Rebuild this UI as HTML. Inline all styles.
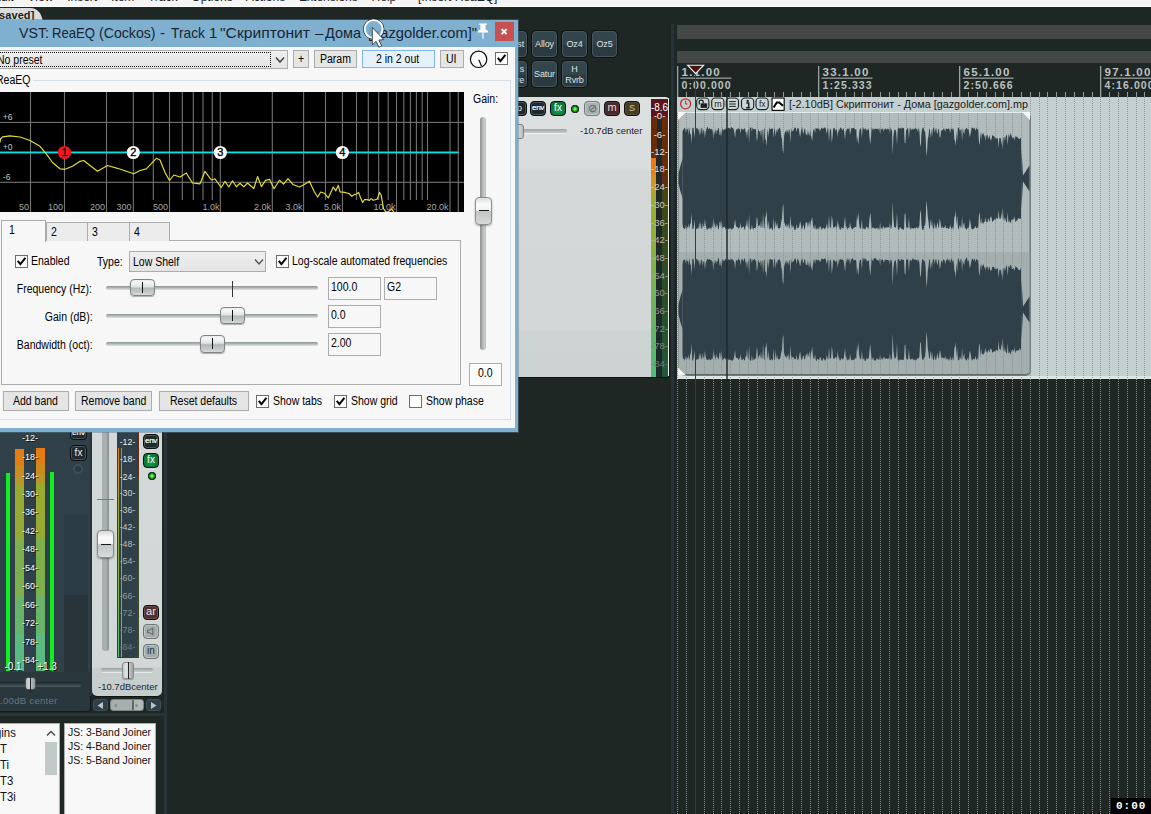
<!DOCTYPE html>
<html lang="ru">
<head>
<meta charset="utf-8">
<title>REAPER - ReaEQ</title>
<style>
*{box-sizing:border-box;margin:0;padding:0}
html,body{width:1151px;height:814px;overflow:hidden;background:#1f2725;font-family:"Liberation Sans",sans-serif;font-size:12px;color:#000}
.a{position:absolute}
.t{position:absolute;white-space:nowrap;transform-origin:0 0;transform:scaleX(.875);line-height:14px;font-size:12px;color:#000}
.btn{position:absolute;border:1px solid #acacac;background:#e5e5e5;height:20px}
.btn .t{top:2px}
.cb{position:absolute;width:13px;height:13px;border:1px solid #6c6c6c;background:#fff}
.cb svg{position:absolute;left:0;top:0}
.inp{position:absolute;border:1px solid #abadb3;background:#f7f7f7;height:23px}
.inp .t{left:2px;top:2px}
.trk{position:absolute;height:4px;border-radius:2px;background:linear-gradient(#8c9292,#b9bdbd 55%,#e2e4e4);}
.th{position:absolute;width:25px;height:17.5px;border-radius:4px;border:1px solid #7f8587;background:linear-gradient(#e9ebeb 0%,#f6f7f7 15%,#e2e5e5 44%,#b4baba 54%,#c2c7c7 80%,#d8dbdb 100%);box-shadow:0 1px 1px rgba(0,0,0,.3)}
.th i{position:absolute;left:10.8px;top:2px;width:1.4px;height:11px;background:#111}
.tb{position:absolute;width:25px;height:26px;border-radius:4px;background:linear-gradient(#34464d 0,#32434a 52%,#2b3a40 56%,#2c3b41 100%);border:1px solid #45555b;box-shadow:0 0 0 1px #0d1213;color:#dde3e3;font-size:9px;line-height:11px;letter-spacing:-.15px;text-align:center}
.sb{position:absolute;width:16px;height:15px;border-radius:4px;background:#20292b;border:1px solid #0c1011;box-shadow:inset 0 0 0 1px #4a5659;color:#e8eeee;font-size:9px;line-height:12px;text-align:center;overflow:hidden}
.ml{position:absolute;font-size:10px;line-height:10px;color:#fff;white-space:nowrap;text-align:center}
.rl{position:absolute;font-size:11.5px;font-weight:bold;line-height:12px;color:#bac2c0;white-space:nowrap;letter-spacing:.3px}
</style>
</head>
<body>
<!-- ============ main window background pieces ============ -->
<div class="a" id="menubar" style="left:0;top:0;width:1151px;height:7px;background:#f5f5f5;border-bottom:1.5px solid #fff;overflow:hidden">
  <div class="t" style="left:-7px;top:-10px;color:#222;transform:none;word-spacing:10.5px">Edit View Insert Item Track Options Actions Extensions Help</div>
  <div class="t" style="left:418px;top:-10px;color:#222;transform:none">[Insert ReaEQ]</div>
</div>
<div class="a" id="tabbar" style="left:0;top:7px;width:1151px;height:14px;background:#1f2725"></div>
<div class="a" id="projtab" style="left:-6px;top:8px;width:48.5px;height:13px;background:#d9dcdc;border-radius:3px 8px 0 0;transform:skewX(18deg);transform-origin:0 100%"></div>
<div class="a" style="left:-1px;top:8px;font-weight:bold;font-size:11px;line-height:14px;color:#1c1c1c;letter-spacing:.1px">saved]</div>
<!-- ============ toolbar buttons ============ -->
<div class="tb" style="left:502px;top:31px;"><span style="position:absolute;right:2px;top:7px">st</span></div>
<div class="tb" style="left:532px;top:31px;"><span style="position:relative;top:7px">Alloy</span></div>
<div class="tb" style="left:562px;top:31px;"><span style="position:relative;top:7px">Oz4</span></div>
<div class="tb" style="left:592px;top:31px;"><span style="position:relative;top:7px">Oz5</span></div>
<div class="tb" style="left:502px;top:61px;"><span style="position:absolute;right:2px;top:2px;text-align:right">s<br>re</span></div>
<div class="tb" style="left:532px;top:61px;"><span style="position:relative;top:7px">Satur</span></div>
<div class="tb" style="left:562px;top:61px;"><span style="position:relative;top:2px">H<br>Rvrb</span></div>
<!-- ============ track control panel ============ -->
<div class="a" id="tcp" style="left:500px;top:97px;width:169px;height:280px;border-radius:0 4px 4px 0;background:linear-gradient(#dce0e0 0,#d9dddd 72px,#d4d8d8 74px,#d3d7d7 232px,#ced3d3 234px,#cdd2d2 100%);box-shadow:1px 1px 0 #0f1413"></div>
<div class="sb" style="left:510.5px;top:101px">io</div>
<div class="sb" style="left:530px;top:101px;font-size:8px;letter-spacing:-.3px;text-shadow:0 0 .6px #fff">env</div>
<div class="sb" style="left:550px;top:101px;background:radial-gradient(ellipse at 50% 65%,#1a9c52,#076129);box-shadow:inset 0 0 0 1px #0e7a3c;color:#fff;font-size:10px">fx</div>
<div class="a" style="left:568.5px;top:102.5px;width:12px;height:12px;border-radius:6px;background:radial-gradient(circle closest-side at 50% 50%,#b4ff9a 0,#30d825 26%,#167018 46%,#26342b 54%,#26342b 68%,rgba(38,52,43,0) 74%)"></div>
<div class="sb" style="left:584px;top:101px;background:#a9b0b0;box-shadow:inset 0 0 0 1px #c4caca;border-color:#70787a;color:#596163;font-size:11px;line-height:13px">&#8856;</div>
<div class="sb" style="left:604px;top:101px;background:#472a2d;box-shadow:inset 0 0 0 1px #57383a;color:#e8dada;font-size:11px;line-height:11px">m</div>
<div class="sb" style="left:624px;top:101px;background:#463e22;box-shadow:inset 0 0 0 1px #585030;color:#d0c8a0;font-size:9px;line-height:13px">S</div>
<div class="a" style="left:515px;top:129px;width:52px;height:4px;border-radius:2px;background:linear-gradient(#9ea5a5,#c4caca);box-shadow:0 1px 0 #eef1f1"></div>
<div class="a" style="left:513px;top:124px;width:11px;height:15px;border-radius:3px;background:linear-gradient(90deg,#f4f4f4,#b8bcbc);border:1px solid #7d8486"></div>
<div class="a" style="left:580px;top:125px;font-size:9.5px;line-height:12px;color:#1c2224;letter-spacing:0;white-space:nowrap">-10.7dB center</div>
<div class="a" id="tcpmeter" style="left:651px;top:99px;width:17px;height:278px;background:#1d2628;overflow:hidden">
 <div class="a" style="left:0;top:0;width:17px;height:18px;background:#5c1519"></div>
 <div class="a" style="left:0;top:18px;width:5.5px;height:41px;background:#6a2c08"></div>
 <div class="a" style="left:0;top:58.5px;width:4.8px;height:220px;background:linear-gradient(#ea7a10 0,#e8800f 16px,#d8901a 17px,#d09820 28px,#bca028 29px,#b4a42a 38px,#9cae30 39px,#94b034 70px,#88b23c 90px,#7cb44c 120px,#6cb45c 150px,#5cb86c 185px,#50be7c 220px)"></div>
 <div class="a" style="left:5.5px;top:18px;width:5px;height:260px;background:#1f282b"></div>
 <div class="a" style="left:10.5px;top:18px;width:6.5px;height:260px;background:linear-gradient(#6a2c08 0,#642e0a 69px,#4c4212 71px,#3e4a18 90px,#344a1e 130px,#2c4e26 170px,#25522e 210px,#1e5a3a 260px)"></div>
 <div class="ml" style="left:-4px;width:25px;top:3.5px;color:rgb(255,255,255);font-size:10px">-8.6</div>
 <div class="ml" style="left:-4px;width:25px;top:12.3px;color:rgb(246,246,246);font-size:9.5px">-0-</div>
 <div class="ml" style="left:-4px;width:25px;top:30.7px;color:rgb(237,237,237);font-size:9.5px">-6-</div>
 <div class="ml" style="left:-4px;width:25px;top:47.5px;color:rgb(228,228,228);font-size:9.5px">-12-</div>
 <div class="ml" style="left:-4px;width:25px;top:65.3px;color:rgb(219,219,219);font-size:9.5px">-18-</div>
 <div class="ml" style="left:-4px;width:25px;top:83.3px;color:rgb(210,210,210);font-size:9.5px">-24-</div>
 <div class="ml" style="left:-4px;width:25px;top:100.9px;color:rgb(201,201,201);font-size:9.5px">-30-</div>
 <div class="ml" style="left:-4px;width:25px;top:118.7px;color:rgb(192,192,192);font-size:9.5px">-36-</div>
 <div class="ml" style="left:-4px;width:25px;top:135.5px;color:rgb(183,183,183);font-size:9.5px">-42-</div>
 <div class="ml" style="left:-4px;width:25px;top:154.4px;color:rgb(174,174,174);font-size:9.5px">-48-</div>
 <div class="ml" style="left:-4px;width:25px;top:172.0px;color:rgb(165,165,165);font-size:9.5px">-54-</div>
 <div class="ml" style="left:-4px;width:25px;top:188.7px;color:rgb(156,156,156);font-size:9.5px">-60-</div>
 <div class="ml" style="left:-4px;width:25px;top:207.0px;color:rgb(147,147,147);font-size:9.5px">-66-</div>
 <div class="ml" style="left:-4px;width:25px;top:224.6px;color:rgb(138,138,138);font-size:9.5px">-72-</div>
 <div class="ml" style="left:-4px;width:25px;top:241.7px;color:rgb(129,129,129);font-size:9.5px">-78-</div>
 <div class="ml" style="left:-4px;width:25px;top:260.3px;color:rgb(120,120,120);font-size:9.5px">-84-</div>
</div>
<div class="a" style="left:668px;top:98px;width:1px;height:278px;background:#eef1f1"></div>
<div class="a" style="left:671px;top:24px;width:3px;height:790px;background:#27333a"></div>
<!-- ============ arrange view ============ -->
<div class="a" style="left:677px;top:25px;width:474px;height:14px;background:#434847"></div>
<div class="a" style="left:677px;top:51px;width:474px;height:12px;background:#434847"></div>
<div class="a" id="lane" style="left:677px;top:97px;width:474px;height:281px;background:#c4cfcf"></div>
<div class="a" id="item" style="left:678px;top:112px;width:352px;height:263px;background:linear-gradient(#b2bbbb 0,#b2bbbb 139px,#a4aeae 139px,#a4aeae 100%);border-radius:5px;border:1px solid #8d9797;border-top-color:#e6eaea;border-bottom-color:#5f6969;box-shadow:1px 1px 0 #6f7878"></div>
<div class="a" style="left:677px;top:376px;width:474px;height:2.5px;background:#dfe5e5"></div>
<svg class="a" style="left:677px;top:97px" width="474" height="281" viewBox="677 97 474 281" shape-rendering="crispEdges">
<line x1="677.5" y1="113" x2="677.5" y2="378" stroke="#7d8f8f" stroke-opacity=".8" stroke-width="1" stroke-dasharray="1 1"/>
<line x1="686.5" y1="113" x2="686.5" y2="378" stroke="#7d8f8f" stroke-opacity=".8" stroke-width="1" stroke-dasharray="1 1"/>
<line x1="695.5" y1="113" x2="695.5" y2="378" stroke="#7d8f8f" stroke-opacity=".8" stroke-width="1" stroke-dasharray="1 1"/>
<line x1="704.5" y1="113" x2="704.5" y2="378" stroke="#7d8f8f" stroke-opacity=".8" stroke-width="1" stroke-dasharray="1 1"/>
<line x1="713.5" y1="113" x2="713.5" y2="378" stroke="#7d8f8f" stroke-opacity=".8" stroke-width="1" stroke-dasharray="1 1"/>
<line x1="721.5" y1="113" x2="721.5" y2="378" stroke="#7d8f8f" stroke-opacity=".8" stroke-width="1" stroke-dasharray="1 1"/>
<line x1="730.5" y1="113" x2="730.5" y2="378" stroke="#7d8f8f" stroke-opacity=".8" stroke-width="1" stroke-dasharray="1 1"/>
<line x1="739.5" y1="113" x2="739.5" y2="378" stroke="#7d8f8f" stroke-opacity=".8" stroke-width="1" stroke-dasharray="1 1"/>
<line x1="748.5" y1="113" x2="748.5" y2="378" stroke="#7d8f8f" stroke-opacity=".8" stroke-width="1" stroke-dasharray="1 1"/>
<line x1="757.5" y1="113" x2="757.5" y2="378" stroke="#7d8f8f" stroke-opacity=".8" stroke-width="1" stroke-dasharray="1 1"/>
<line x1="765.5" y1="113" x2="765.5" y2="378" stroke="#7d8f8f" stroke-opacity=".8" stroke-width="1" stroke-dasharray="1 1"/>
<line x1="774.5" y1="113" x2="774.5" y2="378" stroke="#7d8f8f" stroke-opacity=".8" stroke-width="1" stroke-dasharray="1 1"/>
<line x1="783.5" y1="113" x2="783.5" y2="378" stroke="#7d8f8f" stroke-opacity=".8" stroke-width="1" stroke-dasharray="1 1"/>
<line x1="792.5" y1="113" x2="792.5" y2="378" stroke="#7d8f8f" stroke-opacity=".8" stroke-width="1" stroke-dasharray="1 1"/>
<line x1="801.5" y1="113" x2="801.5" y2="378" stroke="#7d8f8f" stroke-opacity=".8" stroke-width="1" stroke-dasharray="1 1"/>
<line x1="810.5" y1="113" x2="810.5" y2="378" stroke="#7d8f8f" stroke-opacity=".8" stroke-width="1" stroke-dasharray="1 1"/>
<line x1="818.5" y1="113" x2="818.5" y2="378" stroke="#7d8f8f" stroke-opacity=".8" stroke-width="1" stroke-dasharray="1 1"/>
<line x1="827.5" y1="113" x2="827.5" y2="378" stroke="#7d8f8f" stroke-opacity=".8" stroke-width="1" stroke-dasharray="1 1"/>
<line x1="836.5" y1="113" x2="836.5" y2="378" stroke="#7d8f8f" stroke-opacity=".8" stroke-width="1" stroke-dasharray="1 1"/>
<line x1="845.5" y1="113" x2="845.5" y2="378" stroke="#7d8f8f" stroke-opacity=".8" stroke-width="1" stroke-dasharray="1 1"/>
<line x1="854.5" y1="113" x2="854.5" y2="378" stroke="#7d8f8f" stroke-opacity=".8" stroke-width="1" stroke-dasharray="1 1"/>
<line x1="862.5" y1="113" x2="862.5" y2="378" stroke="#7d8f8f" stroke-opacity=".8" stroke-width="1" stroke-dasharray="1 1"/>
<line x1="871.5" y1="113" x2="871.5" y2="378" stroke="#7d8f8f" stroke-opacity=".8" stroke-width="1" stroke-dasharray="1 1"/>
<line x1="880.5" y1="113" x2="880.5" y2="378" stroke="#7d8f8f" stroke-opacity=".8" stroke-width="1" stroke-dasharray="1 1"/>
<line x1="889.5" y1="113" x2="889.5" y2="378" stroke="#7d8f8f" stroke-opacity=".8" stroke-width="1" stroke-dasharray="1 1"/>
<line x1="898.5" y1="113" x2="898.5" y2="378" stroke="#7d8f8f" stroke-opacity=".8" stroke-width="1" stroke-dasharray="1 1"/>
<line x1="906.5" y1="113" x2="906.5" y2="378" stroke="#7d8f8f" stroke-opacity=".8" stroke-width="1" stroke-dasharray="1 1"/>
<line x1="915.5" y1="113" x2="915.5" y2="378" stroke="#7d8f8f" stroke-opacity=".8" stroke-width="1" stroke-dasharray="1 1"/>
<line x1="924.5" y1="113" x2="924.5" y2="378" stroke="#7d8f8f" stroke-opacity=".8" stroke-width="1" stroke-dasharray="1 1"/>
<line x1="933.5" y1="113" x2="933.5" y2="378" stroke="#7d8f8f" stroke-opacity=".8" stroke-width="1" stroke-dasharray="1 1"/>
<line x1="942.5" y1="113" x2="942.5" y2="378" stroke="#7d8f8f" stroke-opacity=".8" stroke-width="1" stroke-dasharray="1 1"/>
<line x1="951.5" y1="113" x2="951.5" y2="378" stroke="#7d8f8f" stroke-opacity=".8" stroke-width="1" stroke-dasharray="1 1"/>
<line x1="959.5" y1="113" x2="959.5" y2="378" stroke="#7d8f8f" stroke-opacity=".8" stroke-width="1" stroke-dasharray="1 1"/>
<line x1="968.5" y1="113" x2="968.5" y2="378" stroke="#7d8f8f" stroke-opacity=".8" stroke-width="1" stroke-dasharray="1 1"/>
<line x1="977.5" y1="113" x2="977.5" y2="378" stroke="#7d8f8f" stroke-opacity=".8" stroke-width="1" stroke-dasharray="1 1"/>
<line x1="986.5" y1="113" x2="986.5" y2="378" stroke="#7d8f8f" stroke-opacity=".8" stroke-width="1" stroke-dasharray="1 1"/>
<line x1="995.5" y1="113" x2="995.5" y2="378" stroke="#7d8f8f" stroke-opacity=".8" stroke-width="1" stroke-dasharray="1 1"/>
<line x1="1003.5" y1="113" x2="1003.5" y2="378" stroke="#7d8f8f" stroke-opacity=".8" stroke-width="1" stroke-dasharray="1 1"/>
<line x1="1012.5" y1="113" x2="1012.5" y2="378" stroke="#7d8f8f" stroke-opacity=".8" stroke-width="1" stroke-dasharray="1 1"/>
<line x1="1021.5" y1="113" x2="1021.5" y2="378" stroke="#7d8f8f" stroke-opacity=".8" stroke-width="1" stroke-dasharray="1 1"/>
<line x1="1030.5" y1="97" x2="1030.5" y2="378" stroke="#7d8f8f" stroke-opacity=".8" stroke-width="1" stroke-dasharray="1 1"/>
<line x1="1039.5" y1="97" x2="1039.5" y2="378" stroke="#7d8f8f" stroke-opacity=".8" stroke-width="1" stroke-dasharray="1 1"/>
<line x1="1047.5" y1="97" x2="1047.5" y2="378" stroke="#7d8f8f" stroke-opacity=".8" stroke-width="1" stroke-dasharray="1 1"/>
<line x1="1056.5" y1="97" x2="1056.5" y2="378" stroke="#7d8f8f" stroke-opacity=".8" stroke-width="1" stroke-dasharray="1 1"/>
<line x1="1065.5" y1="97" x2="1065.5" y2="378" stroke="#7d8f8f" stroke-opacity=".8" stroke-width="1" stroke-dasharray="1 1"/>
<line x1="1074.5" y1="97" x2="1074.5" y2="378" stroke="#7d8f8f" stroke-opacity=".8" stroke-width="1" stroke-dasharray="1 1"/>
<line x1="1083.5" y1="97" x2="1083.5" y2="378" stroke="#7d8f8f" stroke-opacity=".8" stroke-width="1" stroke-dasharray="1 1"/>
<line x1="1092.5" y1="97" x2="1092.5" y2="378" stroke="#7d8f8f" stroke-opacity=".8" stroke-width="1" stroke-dasharray="1 1"/>
<line x1="1100.5" y1="97" x2="1100.5" y2="378" stroke="#7d8f8f" stroke-opacity=".8" stroke-width="1" stroke-dasharray="1 1"/>
<line x1="1109.5" y1="97" x2="1109.5" y2="378" stroke="#7d8f8f" stroke-opacity=".8" stroke-width="1" stroke-dasharray="1 1"/>
<line x1="1118.5" y1="97" x2="1118.5" y2="378" stroke="#7d8f8f" stroke-opacity=".8" stroke-width="1" stroke-dasharray="1 1"/>
<line x1="1127.5" y1="97" x2="1127.5" y2="378" stroke="#7d8f8f" stroke-opacity=".8" stroke-width="1" stroke-dasharray="1 1"/>
<line x1="1136.5" y1="97" x2="1136.5" y2="378" stroke="#7d8f8f" stroke-opacity=".8" stroke-width="1" stroke-dasharray="1 1"/>
<line x1="1144.5" y1="97" x2="1144.5" y2="378" stroke="#7d8f8f" stroke-opacity=".8" stroke-width="1" stroke-dasharray="1 1"/>
</svg>
<svg class="a" style="left:677px;top:97px" width="474" height="281" viewBox="0 0 474 281">
<polygon fill="#2f4048" points="5.5,34.7 6.2,32.8 6.9,32.1 7.6,30.8 8.3,31.8 9.0,36.1 9.7,31.6 10.4,33.0 11.1,30.5 11.8,38.0 12.5,29.8 13.2,37.2 13.9,36.7 14.6,46.8 15.3,31.6 16.0,30.4 16.7,31.5 17.4,41.0 18.1,32.0 18.8,31.4 19.5,31.5 20.2,30.5 20.9,32.8 21.6,32.1 22.3,38.9 23.0,30.1 23.7,38.1 24.4,31.3 25.1,30.7 25.8,38.0 26.5,32.0 27.2,34.5 27.9,41.0 28.6,35.0 29.3,32.6 30.0,30.5 30.7,29.7 31.4,32.8 32.1,31.0 32.8,31.7 33.5,32.2 34.2,31.5 34.9,33.0 35.6,32.8 36.3,42.3 37.0,33.2 37.7,37.8 38.4,31.3 39.1,37.6 39.8,32.7 40.5,34.2 41.2,31.0 41.9,31.5 42.6,37.9 43.3,38.3 44.0,32.2 44.7,40.0 45.4,30.1 46.1,33.4 46.8,32.5 47.5,32.5 48.3,32.6 49.0,30.3 49.7,32.7 50.4,31.2 51.1,31.0 51.8,30.4 52.5,31.5 53.2,31.6 53.9,31.6 54.6,29.5 55.3,30.9 56.0,30.7 56.7,32.2 57.4,35.6 58.1,40.9 58.8,33.5 59.5,31.9 60.2,33.0 60.9,31.1 61.6,31.5 62.3,32.0 63.0,31.8 63.7,36.8 64.4,30.9 65.1,32.4 65.8,31.8 66.5,32.7 67.2,32.0 67.9,30.5 68.6,35.7 69.3,34.5 70.0,41.5 70.7,33.8 71.4,31.8 72.1,46.0 72.8,29.9 73.5,31.0 74.2,29.9 74.9,34.9 75.6,30.3 76.3,32.1 77.0,32.0 77.7,32.4 78.4,31.6 79.1,33.5 79.8,44.1 80.5,41.2 81.2,31.9 81.9,33.6 82.6,35.1 83.3,33.3 84.0,40.0 84.7,33.3 85.4,32.3 86.1,47.5 86.8,32.5 87.5,30.5 88.2,43.1 88.9,42.6 89.6,49.7 90.3,35.6 91.0,31.7 91.7,40.2 92.4,30.0 93.1,31.9 93.8,32.4 94.5,31.4 95.2,31.4 95.9,31.5 96.6,41.2 97.3,30.6 98.0,33.1 98.7,39.7 99.4,32.0 100.1,36.0 100.8,31.2 101.5,32.9 102.2,31.0 102.9,30.5 103.6,33.5 104.3,40.0 105.0,41.5 105.7,53.4 106.4,56.5 107.1,39.5 107.8,35.3 108.5,34.7 109.2,32.7 109.9,36.2 110.6,32.3 111.3,36.7 112.0,32.0 112.7,32.9 113.4,46.0 114.1,30.4 114.8,35.0 115.5,33.8 116.2,34.0 116.9,32.3 117.6,30.2 118.3,30.6 119.0,31.7 119.7,35.0 120.4,30.4 121.1,31.6 121.8,31.2 122.5,36.9 123.2,40.0 123.9,34.5 124.6,32.0 125.3,30.1 126.0,37.0 126.7,35.2 127.4,31.9 128.1,31.2 128.8,37.5 129.5,37.3 130.2,38.7 130.9,32.5 131.6,36.7 132.3,39.4 133.1,32.8 133.8,37.9 134.5,40.6 135.2,43.7 135.9,35.3 136.6,32.3 137.3,31.7 138.0,36.4 138.7,30.8 139.4,31.2 140.1,32.3 140.8,30.9 141.5,31.8 142.2,31.6 142.9,34.4 143.6,32.4 144.3,31.0 145.0,30.4 145.7,32.1 146.4,31.6 147.1,30.6 147.8,30.8 148.5,30.4 149.2,34.1 149.9,36.8 150.6,31.1 151.3,31.8 152.0,44.7 152.7,34.5 153.4,31.3 154.1,32.7 154.8,45.7 155.5,40.0 156.2,30.6 156.9,32.0 157.6,30.8 158.3,33.1 159.0,33.7 159.7,31.5 160.4,40.4 161.1,31.7 161.8,35.8 162.5,32.3 163.2,31.3 163.9,30.0 164.6,31.8 165.3,33.4 166.0,31.9 166.7,31.3 167.4,36.8 168.1,43.1 168.8,34.6 169.5,33.3 170.2,31.4 170.9,31.9 171.6,31.9 172.3,30.1 173.0,38.1 173.7,34.3 174.4,31.1 175.1,31.2 175.8,30.9 176.5,30.9 177.2,31.2 177.9,31.9 178.6,32.8 179.3,31.9 180.0,46.2 180.7,38.8 181.4,48.6 182.1,36.2 182.8,31.7 183.5,31.3 184.2,32.4 184.9,41.2 185.6,30.3 186.3,30.7 187.0,33.0 187.7,31.7 188.4,31.5 189.1,32.0 189.8,33.9 190.5,32.8 191.2,31.2 191.9,33.2 192.6,41.1 193.3,47.5 194.0,39.9 194.7,30.6 195.4,31.8 196.1,33.4 196.8,31.2 197.5,32.2 198.2,31.7 198.9,31.7 199.6,32.1 200.3,32.3 201.0,30.9 201.7,33.3 202.4,30.6 203.1,37.6 203.8,31.0 204.5,32.7 205.2,32.3 205.9,30.9 206.6,34.6 207.3,32.6 208.0,32.1 208.7,31.2 209.4,32.7 210.1,32.6 210.8,31.3 211.5,32.7 212.2,31.3 212.9,37.1 213.6,30.0 214.3,32.6 215.0,33.8 215.7,57.7 216.4,39.2 217.2,33.2 217.9,32.4 218.6,32.9 219.3,35.4 220.0,48.3 220.7,32.5 221.4,30.7 222.1,30.9 222.8,31.8 223.5,31.6 224.2,30.2 224.9,32.2 225.6,30.5 226.3,30.9 227.0,31.1 227.7,46.0 228.4,46.5 229.1,32.7 229.8,33.4 230.5,31.1 231.2,30.9 231.9,41.9 232.6,32.8 233.3,30.0 234.0,33.7 234.7,32.0 235.4,32.5 236.1,30.8 236.8,33.3 237.5,31.8 238.2,31.6 238.9,31.1 239.6,32.2 240.3,32.2 241.0,35.4 241.7,30.1 242.4,34.0 243.1,46.4 243.8,50.0 244.5,35.3 245.2,32.0 245.9,30.5 246.6,30.7 247.3,35.0 248.0,33.2 248.7,41.6 249.4,59.4 250.1,53.7 250.8,41.9 251.5,38.9 252.2,31.8 252.9,32.2 253.6,41.3 254.3,31.4 255.0,40.2 255.7,32.8 256.4,31.0 257.1,30.5 257.8,36.1 258.5,32.3 259.2,30.8 259.9,35.4 260.6,37.0 261.3,32.0 262.0,32.0 262.7,40.9 263.4,39.8 264.1,33.7 264.8,33.2 265.5,33.2 266.2,32.7 266.9,31.1 267.6,32.5 268.3,35.1 269.0,30.9 269.7,32.0 270.4,31.9 271.1,32.3 271.8,31.1 272.5,32.4 273.2,36.0 273.9,31.2 274.6,31.8 275.3,33.0 276.0,30.7 276.7,33.1 277.4,42.4 278.1,44.1 278.8,49.1 279.5,33.7 280.2,44.3 280.9,30.6 281.6,30.4 282.3,31.8 283.0,34.8 283.7,32.2 284.4,32.2 285.1,44.3 285.8,30.3 286.5,35.3 287.2,37.5 287.9,31.9 288.6,32.7 289.3,30.4 290.0,31.6 290.7,32.5 291.4,31.9 292.1,35.4 292.8,40.6 293.5,37.1 294.2,33.2 294.9,30.0 295.6,30.9 296.3,31.3 297.0,32.1 297.7,30.5 298.4,33.7 299.1,32.3 299.8,30.5 300.5,33.0 301.2,31.8 302.0,45.4 302.7,48.0 303.4,34.6 304.1,43.5 304.8,35.5 305.5,38.1 306.2,35.5 306.9,38.3 307.6,38.8 308.3,43.7 309.0,37.8 309.7,39.5 310.4,37.2 311.1,42.3 311.8,40.6 312.5,38.0 313.2,42.1 313.9,43.5 314.6,41.9 315.3,37.8 316.0,38.7 316.7,39.1 317.4,39.5 318.1,42.1 318.8,39.7 319.5,42.0 320.2,41.2 320.9,41.3 321.6,50.7 322.3,41.1 323.0,41.1 323.7,41.0 324.4,48.1 325.1,40.2 325.8,52.7 326.5,40.4 327.2,39.4 327.9,44.1 328.6,40.0 329.3,38.1 330.0,38.6 330.7,48.2 331.4,38.6 332.1,37.3 332.8,41.0 333.5,35.8 334.2,38.1 334.9,40.1 335.6,41.4 336.3,41.2 337.0,39.6 337.7,43.6 338.4,39.4 339.1,39.0 339.8,40.6 340.5,39.7 341.2,41.9 341.9,41.0 342.6,42.4 343.3,41.3 344.0,40.4 344.0,122.2 343.3,121.2 342.6,121.5 341.9,122.1 341.2,120.6 340.5,123.3 339.8,123.3 339.1,124.2 338.4,125.2 337.7,118.5 337.0,123.4 336.3,121.2 335.6,122.8 334.9,122.3 334.2,124.1 333.5,126.8 332.8,123.3 332.1,125.6 331.4,124.8 330.7,115.1 330.0,124.9 329.3,125.3 328.6,122.6 327.9,120.0 327.2,124.2 326.5,121.6 325.8,110.1 325.1,122.7 324.4,115.4 323.7,122.2 323.0,121.3 322.3,121.4 321.6,112.9 320.9,121.6 320.2,122.1 319.5,120.1 318.8,123.6 318.1,121.3 317.4,122.7 316.7,123.2 316.0,124.2 315.3,125.2 314.6,120.8 313.9,119.3 313.2,120.9 312.5,125.0 311.8,123.1 311.1,121.0 310.4,125.5 309.7,124.7 309.0,125.0 308.3,119.9 307.6,125.2 306.9,124.8 306.2,127.6 305.5,125.3 304.8,126.5 304.1,120.7 303.4,128.3 302.7,115.2 302.0,117.8 301.2,132.1 300.5,129.5 299.8,131.3 299.1,131.0 298.4,128.7 297.7,131.1 297.0,131.4 296.3,131.7 295.6,132.3 294.9,132.6 294.2,130.4 293.5,125.8 292.8,121.8 292.1,128.9 291.4,131.3 290.7,130.5 290.0,132.4 289.3,132.5 288.6,130.9 287.9,131.9 287.2,125.6 286.5,126.9 285.8,131.9 285.1,118.9 284.4,130.6 283.7,130.7 283.0,127.4 282.3,129.4 281.6,132.5 280.9,130.8 280.2,118.6 279.5,128.5 278.8,113.8 278.1,119.4 277.4,119.4 276.7,129.5 276.0,133.2 275.3,129.6 274.6,132.3 273.9,131.1 273.2,127.2 272.5,131.1 271.8,132.3 271.1,131.6 270.4,130.7 269.7,131.0 269.0,131.5 268.3,127.7 267.6,130.4 266.9,130.6 266.2,131.2 265.5,129.1 264.8,131.2 264.1,130.1 263.4,124.6 262.7,121.6 262.0,131.6 261.3,130.0 260.6,124.9 259.9,128.2 259.2,132.1 258.5,130.7 257.8,125.5 257.1,131.0 256.4,131.9 255.7,130.1 255.0,122.4 254.3,130.2 253.6,121.6 252.9,131.8 252.2,131.3 251.5,124.5 250.8,119.7 250.1,109.7 249.4,103.3 248.7,121.9 248.0,129.4 247.3,127.8 246.6,132.5 245.9,132.9 245.2,132.6 244.5,127.7 243.8,112.9 243.1,116.1 242.4,128.4 241.7,131.8 241.0,129.3 240.3,132.0 239.6,129.9 238.9,131.2 238.2,131.3 237.5,131.1 236.8,131.6 236.1,131.5 235.4,131.3 234.7,131.8 234.0,130.0 233.3,132.8 232.6,130.4 231.9,120.7 231.2,131.0 230.5,130.9 229.8,130.3 229.1,130.1 228.4,116.8 227.7,116.5 227.0,132.2 226.3,132.9 225.6,131.9 224.9,131.7 224.2,131.8 223.5,130.6 222.8,130.1 222.1,132.9 221.4,133.0 220.7,130.8 220.0,115.5 219.3,128.5 218.6,131.3 217.9,130.0 217.2,130.4 216.4,122.3 215.7,105.2 215.0,127.8 214.3,131.5 213.6,131.7 212.9,125.3 212.2,131.0 211.5,130.1 210.8,130.7 210.1,130.0 209.4,130.6 208.7,130.3 208.0,132.1 207.3,130.4 206.6,128.5 205.9,132.7 205.2,129.8 204.5,131.6 203.8,132.1 203.1,125.0 202.4,133.3 201.7,130.4 201.0,132.9 200.3,130.4 199.6,131.1 198.9,131.8 198.2,131.4 197.5,131.1 196.8,131.8 196.1,130.1 195.4,131.1 194.7,131.9 194.0,123.4 193.3,115.2 192.6,121.2 191.9,129.8 191.2,132.5 190.5,130.4 189.8,129.3 189.1,130.5 188.4,132.3 187.7,132.4 187.0,130.7 186.3,131.7 185.6,132.2 184.9,122.1 184.2,130.3 183.5,131.9 182.8,131.2 182.1,126.8 181.4,115.1 180.7,124.4 180.0,117.2 179.3,130.4 178.6,129.7 177.9,130.3 177.2,130.6 176.5,130.7 175.8,132.3 175.1,132.2 174.4,131.2 173.7,129.6 173.0,124.9 172.3,132.0 171.6,130.5 170.9,130.6 170.2,132.9 169.5,129.7 168.8,129.2 168.1,119.6 167.4,125.3 166.7,131.3 166.0,131.5 165.3,131.3 164.6,129.6 163.9,132.7 163.2,132.5 162.5,131.9 161.8,126.3 161.1,131.2 160.4,122.5 159.7,133.2 159.0,128.1 158.3,130.3 157.6,130.3 156.9,129.8 156.2,132.1 155.5,122.9 154.8,118.3 154.1,129.6 153.4,131.5 152.7,129.2 152.0,118.2 151.3,131.5 150.6,131.2 149.9,125.9 149.2,130.0 148.5,131.3 147.8,131.5 147.1,132.3 146.4,130.7 145.7,130.8 145.0,132.3 144.3,132.6 143.6,130.1 142.9,128.5 142.2,131.8 141.5,131.3 140.8,132.6 140.1,130.3 139.4,132.7 138.7,131.9 138.0,127.0 137.3,132.3 136.6,131.1 135.9,128.1 135.2,119.4 134.5,123.1 133.8,125.1 133.1,130.5 132.3,123.9 131.6,126.4 130.9,131.0 130.2,125.2 129.5,125.8 128.8,125.3 128.1,130.6 127.4,133.0 126.7,129.2 126.0,127.2 125.3,132.1 124.6,132.1 123.9,128.1 123.2,124.3 122.5,127.4 121.8,131.1 121.1,130.7 120.4,131.6 119.7,127.0 119.0,132.3 118.3,132.7 117.6,133.2 116.9,130.7 116.2,128.6 115.5,130.4 114.8,127.0 114.1,132.6 113.4,117.8 112.7,130.1 112.0,132.1 111.3,125.9 110.6,130.8 109.9,126.3 109.2,130.4 108.5,129.1 107.8,126.9 107.1,125.0 106.4,106.5 105.7,109.9 105.0,121.8 104.3,124.2 103.6,129.6 102.9,131.4 102.2,131.5 101.5,131.4 100.8,130.6 100.1,125.6 99.4,130.0 98.7,123.2 98.0,131.0 97.3,132.0 96.6,120.6 95.9,132.7 95.2,133.3 94.5,130.6 93.8,131.6 93.1,131.7 92.4,132.7 91.7,123.4 91.0,132.2 90.3,126.9 89.6,113.2 88.9,119.2 88.2,120.0 87.5,131.7 86.8,130.6 86.1,115.8 85.4,130.8 84.7,130.6 84.0,123.3 83.3,131.1 82.6,127.7 81.9,128.5 81.2,130.0 80.5,122.2 79.8,119.8 79.1,129.2 78.4,131.6 77.7,131.0 77.0,130.7 76.3,132.8 75.6,131.5 74.9,127.8 74.2,131.9 73.5,132.5 72.8,132.2 72.1,117.0 71.4,131.6 70.7,129.0 70.0,122.1 69.3,128.2 68.6,128.9 67.9,133.1 67.2,131.7 66.5,129.0 65.8,130.1 65.1,130.8 64.4,131.6 63.7,125.6 63.0,130.8 62.3,130.1 61.6,132.1 60.9,130.4 60.2,130.2 59.5,130.0 58.8,128.4 58.1,122.1 57.4,127.0 56.7,131.4 56.0,130.7 55.3,132.6 54.6,132.7 53.9,131.1 53.2,132.0 52.5,131.3 51.8,131.8 51.1,132.6 50.4,130.8 49.7,131.3 49.0,132.7 48.3,131.6 47.5,129.3 46.8,130.5 46.1,129.7 45.4,132.0 44.7,122.6 44.0,131.1 43.3,124.6 42.6,125.1 41.9,131.6 41.2,132.8 40.5,127.3 39.8,130.5 39.1,125.9 38.4,132.0 37.7,125.1 37.0,131.7 36.3,120.3 35.6,130.4 34.9,129.1 34.2,132.8 33.5,131.2 32.8,130.3 32.1,132.4 31.4,131.0 30.7,131.9 30.0,133.4 29.3,130.7 28.6,127.4 27.9,121.9 27.2,128.6 26.5,130.2 25.8,125.7 25.1,131.9 24.4,131.5 23.7,125.0 23.0,132.3 22.3,124.4 21.6,132.0 20.9,130.3 20.2,132.1 19.5,131.8 18.8,132.5 18.1,131.6 17.4,122.5 16.7,131.1 16.0,132.6 15.3,131.3 14.6,115.9 13.9,125.9 13.2,126.9 12.5,132.1 11.8,126.5 11.1,131.0 10.4,129.4 9.7,133.0 9.0,127.6 8.3,131.4 7.6,131.9 6.9,131.0 6.2,131.2 5.5,126.9"/>
<polygon fill="#2f4048" points="5.5,167.3 6.2,162.4 6.9,163.8 7.6,161.9 8.3,163.8 9.0,166.7 9.7,161.9 10.4,164.6 11.1,163.0 11.8,168.2 12.5,160.8 13.2,167.3 13.9,168.0 14.6,178.5 15.3,162.1 16.0,161.6 16.7,163.0 17.4,172.6 18.1,163.1 18.8,162.6 19.5,162.0 20.2,161.9 20.9,164.2 21.6,162.7 22.3,169.2 23.0,161.5 23.7,168.4 24.4,162.0 25.1,163.5 25.8,168.6 26.5,164.1 27.2,164.5 27.9,172.5 28.6,166.8 29.3,164.3 30.0,162.5 30.7,161.7 31.4,163.1 32.1,161.8 32.8,162.7 33.5,162.9 34.2,162.5 34.9,164.8 35.6,164.2 36.3,173.9 37.0,162.8 37.7,167.6 38.4,162.3 39.1,167.5 39.8,163.4 40.5,165.1 41.2,161.1 41.9,161.6 42.6,168.3 43.3,168.4 44.0,163.6 44.7,171.3 45.4,161.6 46.1,164.7 46.8,161.9 47.5,164.2 48.3,162.4 49.0,161.3 49.7,163.7 50.4,163.8 51.1,163.0 51.8,162.0 52.5,163.5 53.2,161.3 53.9,163.7 54.6,161.7 55.3,162.1 56.0,163.4 56.7,163.4 57.4,165.5 58.1,172.1 58.8,164.3 59.5,162.7 60.2,163.7 60.9,163.5 61.6,161.3 62.3,163.1 63.0,163.3 63.7,168.5 64.4,162.6 65.1,161.4 65.8,163.0 66.5,164.6 67.2,161.6 67.9,161.4 68.6,166.0 69.3,164.6 70.0,171.9 70.7,165.0 71.4,162.2 72.1,177.3 72.8,161.3 73.5,161.4 74.2,162.4 74.9,166.3 75.6,161.9 76.3,163.2 77.0,162.7 77.7,161.6 78.4,163.7 79.1,163.2 79.8,174.3 80.5,171.0 81.2,162.1 81.9,164.9 82.6,166.1 83.3,162.9 84.0,170.4 84.7,164.2 85.4,162.9 86.1,177.4 86.8,162.9 87.5,162.6 88.2,175.0 88.9,174.6 89.6,180.2 90.3,167.4 91.0,162.1 91.7,171.9 92.4,162.7 93.1,161.7 93.8,162.5 94.5,162.7 95.2,162.6 95.9,162.8 96.6,172.6 97.3,161.8 98.0,162.3 98.7,172.0 99.4,163.8 100.1,167.3 100.8,162.8 101.5,162.9 102.2,161.8 102.9,163.3 103.6,164.6 104.3,170.5 105.0,173.0 105.7,184.9 106.4,187.6 107.1,169.8 107.8,166.7 108.5,165.0 109.2,162.7 109.9,167.6 110.6,164.1 111.3,168.8 112.0,162.9 112.7,164.1 113.4,176.7 114.1,161.2 114.8,166.2 115.5,164.9 116.2,164.4 116.9,163.6 117.6,162.1 118.3,161.2 119.0,163.0 119.7,167.5 120.4,161.0 121.1,163.1 121.8,163.4 122.5,166.8 123.2,169.6 123.9,164.8 124.6,162.4 125.3,161.3 126.0,166.4 126.7,165.5 127.4,162.3 128.1,162.5 128.8,167.6 129.5,167.7 130.2,168.6 130.9,163.0 131.6,167.8 132.3,171.1 133.1,163.6 133.8,168.2 134.5,170.9 135.2,174.1 135.9,167.6 136.6,163.1 137.3,162.5 138.0,167.3 138.7,162.5 139.4,162.3 140.1,164.1 140.8,162.7 141.5,163.0 142.2,163.0 142.9,165.3 143.6,164.0 144.3,162.6 145.0,161.1 145.7,162.2 146.4,162.6 147.1,161.7 147.8,161.5 148.5,161.7 149.2,164.3 149.9,167.4 150.6,163.2 151.3,162.2 152.0,175.8 152.7,163.8 153.4,162.4 154.1,164.0 154.8,176.8 155.5,171.2 156.2,161.7 156.9,163.4 157.6,163.6 158.3,163.9 159.0,165.6 159.7,162.3 160.4,171.4 161.1,162.0 161.8,167.2 162.5,162.2 163.2,162.6 163.9,161.7 164.6,162.9 165.3,162.8 166.0,162.4 166.7,163.9 167.4,168.8 168.1,174.9 168.8,166.3 169.5,163.7 170.2,160.9 170.9,164.2 171.6,162.6 172.3,161.1 173.0,168.1 173.7,163.8 174.4,162.3 175.1,161.4 175.8,161.3 176.5,163.4 177.2,163.5 177.9,162.8 178.6,163.0 179.3,163.8 180.0,177.8 180.7,169.8 181.4,179.3 182.1,167.5 182.8,163.1 183.5,162.8 184.2,163.3 184.9,172.4 185.6,161.5 186.3,160.7 187.0,163.7 187.7,160.8 188.4,162.5 189.1,161.7 189.8,164.7 190.5,163.9 191.2,163.4 191.9,163.5 192.6,171.8 193.3,178.5 194.0,170.2 194.7,160.9 195.4,163.2 196.1,164.5 196.8,161.2 197.5,161.5 198.2,161.2 198.9,161.1 199.6,163.1 200.3,163.6 201.0,162.2 201.7,164.5 202.4,160.9 203.1,168.8 203.8,161.9 204.5,163.3 205.2,163.1 205.9,162.1 206.6,165.2 207.3,164.7 208.0,161.8 208.7,163.5 209.4,162.7 210.1,162.9 210.8,163.1 211.5,163.5 212.2,163.2 212.9,167.8 213.6,162.3 214.3,163.0 215.0,164.7 215.7,188.6 216.4,170.5 217.2,164.9 217.9,163.4 218.6,162.8 219.3,166.5 220.0,179.2 220.7,162.5 221.4,161.9 222.1,162.2 222.8,163.9 223.5,163.7 224.2,161.4 224.9,162.5 225.6,163.2 226.3,162.5 227.0,163.3 227.7,176.8 228.4,177.8 229.1,162.7 229.8,162.8 230.5,162.6 231.2,162.0 231.9,174.1 232.6,164.1 233.3,162.5 234.0,163.7 234.7,163.5 235.4,162.0 236.1,161.0 236.8,163.0 237.5,162.6 238.2,162.8 238.9,162.7 239.6,163.5 240.3,162.0 241.0,165.4 241.7,162.0 242.4,166.1 243.1,178.3 243.8,180.1 244.5,168.0 245.2,161.7 245.9,162.7 246.6,162.9 247.3,165.3 248.0,163.0 248.7,171.7 249.4,190.1 250.1,185.1 250.8,173.6 251.5,169.3 252.2,162.6 252.9,162.3 253.6,172.9 254.3,163.5 255.0,171.4 255.7,163.4 256.4,162.2 257.1,162.4 257.8,167.2 258.5,162.5 259.2,162.0 259.9,165.9 260.6,168.5 261.3,163.1 262.0,162.3 262.7,172.0 263.4,169.8 264.1,164.6 264.8,163.3 265.5,165.9 266.2,162.4 266.9,162.5 267.6,163.2 268.3,167.2 269.0,163.4 269.7,163.0 270.4,161.3 271.1,164.2 271.8,162.6 272.5,162.5 273.2,166.3 273.9,162.7 274.6,161.2 275.3,165.6 276.0,162.0 276.7,165.2 277.4,173.7 278.1,175.5 278.8,180.9 279.5,165.3 280.2,174.9 280.9,161.3 281.6,161.8 282.3,164.0 283.0,165.8 283.7,162.1 284.4,161.8 285.1,174.6 285.8,163.0 286.5,166.2 287.2,167.9 287.9,163.0 288.6,162.2 289.3,160.8 290.0,160.6 290.7,165.1 291.4,162.7 292.1,165.6 292.8,171.7 293.5,168.4 294.2,165.0 294.9,162.1 295.6,161.2 296.3,164.1 297.0,162.5 297.7,161.6 298.4,165.3 299.1,162.5 299.8,162.1 300.5,163.7 301.2,162.6 302.0,176.2 302.7,178.7 303.4,166.0 304.1,173.8 304.8,167.0 305.5,169.5 306.2,166.8 306.9,169.0 307.6,170.2 308.3,173.6 309.0,169.7 309.7,170.1 310.4,169.4 311.1,173.3 311.8,170.7 312.5,169.4 313.2,173.3 313.9,173.8 314.6,173.0 315.3,169.9 316.0,169.9 316.7,169.5 317.4,170.7 318.1,172.4 318.8,171.3 319.5,172.5 320.2,170.8 320.9,172.0 321.6,181.0 322.3,172.8 323.0,172.9 323.7,172.2 324.4,179.3 325.1,171.1 325.8,184.3 326.5,171.7 327.2,170.2 327.9,174.0 328.6,171.8 329.3,168.3 330.0,169.5 330.7,179.0 331.4,169.4 332.1,169.0 332.8,171.0 333.5,167.4 334.2,168.6 334.9,172.0 335.6,172.1 336.3,171.4 337.0,170.9 337.7,174.2 338.4,169.0 339.1,169.7 339.8,170.5 340.5,170.7 341.2,172.9 341.9,172.2 342.6,173.6 343.3,172.4 344.0,171.0 344.0,253.8 343.3,251.7 342.6,251.3 341.9,254.1 341.2,252.7 340.5,253.8 339.8,253.0 339.1,254.5 338.4,256.0 337.7,249.7 337.0,255.3 336.3,253.5 335.6,252.7 334.9,253.1 334.2,255.6 333.5,257.9 332.8,253.9 332.1,256.6 331.4,256.1 330.7,246.5 330.0,256.4 329.3,255.7 328.6,254.5 327.9,250.1 327.2,254.7 326.5,253.6 325.8,240.5 325.1,253.0 324.4,246.3 323.7,253.4 323.0,252.5 322.3,252.1 321.6,243.8 320.9,254.1 320.2,253.4 319.5,252.6 318.8,254.5 318.1,252.9 317.4,254.7 316.7,254.4 316.0,254.9 315.3,256.1 314.6,252.6 313.9,251.7 313.2,251.7 312.5,255.4 311.8,253.9 311.1,252.3 310.4,256.3 309.7,254.0 309.0,255.8 308.3,250.5 307.6,255.6 306.9,256.6 306.2,258.0 305.5,256.5 304.8,257.1 304.1,251.1 303.4,260.6 302.7,246.4 302.0,248.3 301.2,263.1 300.5,260.3 299.8,263.0 299.1,262.1 298.4,258.7 297.7,262.4 297.0,262.3 296.3,261.8 295.6,262.7 294.9,264.1 294.2,260.3 293.5,255.7 292.8,253.6 292.1,259.4 291.4,263.0 290.7,260.6 290.0,263.0 289.3,263.7 288.6,262.0 287.9,262.3 287.2,256.2 286.5,258.9 285.8,262.8 285.1,250.6 284.4,262.6 283.7,261.8 283.0,259.1 282.3,262.2 281.6,263.6 280.9,262.9 280.2,250.2 279.5,260.8 278.8,245.1 278.1,250.2 277.4,250.5 276.7,261.5 276.0,263.8 275.3,259.7 274.6,262.7 273.9,263.6 273.2,258.7 272.5,262.4 271.8,264.1 271.1,261.4 270.4,262.3 269.7,261.0 269.0,263.6 268.3,258.5 267.6,261.5 266.9,261.3 266.2,261.2 265.5,259.7 264.8,261.7 264.1,259.5 263.4,254.5 262.7,253.5 262.0,261.5 261.3,261.0 260.6,256.0 259.9,258.9 259.2,262.7 258.5,263.2 257.8,258.1 257.1,262.5 256.4,263.2 255.7,261.6 255.0,254.3 254.3,262.2 253.6,253.1 252.9,261.0 252.2,261.8 251.5,255.7 250.8,251.6 250.1,240.6 249.4,234.8 248.7,252.5 248.0,260.8 247.3,259.8 246.6,262.5 245.9,262.9 245.2,262.2 244.5,257.1 243.8,244.7 243.1,246.5 242.4,259.2 241.7,262.3 241.0,260.2 240.3,262.1 239.6,262.4 238.9,264.0 238.2,262.2 237.5,263.1 236.8,262.1 236.1,263.8 235.4,261.2 234.7,262.6 234.0,261.5 233.3,262.9 232.6,260.8 231.9,251.9 231.2,262.1 230.5,263.0 229.8,261.6 229.1,261.8 228.4,247.5 227.7,248.3 227.0,262.4 226.3,262.7 225.6,263.3 224.9,262.2 224.2,263.2 223.5,262.7 222.8,262.0 222.1,263.9 221.4,263.6 220.7,262.5 220.0,246.3 219.3,259.3 218.6,261.0 217.9,261.9 217.2,260.3 216.4,253.2 215.7,236.5 215.0,260.5 214.3,263.1 213.6,262.6 212.9,255.9 212.2,262.2 211.5,261.2 210.8,261.7 210.1,262.1 209.4,261.2 208.7,261.6 208.0,262.3 207.3,259.9 206.6,260.1 205.9,263.4 205.2,261.1 204.5,261.7 203.8,263.2 203.1,256.9 202.4,262.7 201.7,262.0 201.0,263.2 200.3,261.3 199.6,261.4 198.9,263.6 198.2,263.6 197.5,263.5 196.8,263.1 196.1,260.1 195.4,262.4 194.7,262.6 194.0,255.6 193.3,247.1 192.6,252.8 191.9,259.8 191.2,262.2 190.5,262.3 189.8,260.4 189.1,262.8 188.4,264.2 187.7,263.7 187.0,260.8 186.3,262.6 185.6,261.7 184.9,253.4 184.2,261.8 183.5,262.5 182.8,261.0 182.1,257.5 181.4,245.0 180.7,255.0 180.0,248.1 179.3,261.6 178.6,261.2 177.9,261.5 177.2,262.8 176.5,262.4 175.8,263.6 175.1,262.8 174.4,263.2 173.7,261.2 173.0,256.8 172.3,263.5 171.6,262.3 170.9,262.5 170.2,263.7 169.5,260.6 168.8,259.5 168.1,250.5 167.4,256.8 166.7,261.1 166.0,262.6 165.3,262.4 164.6,260.5 163.9,262.5 163.2,263.6 162.5,263.3 161.8,258.3 161.1,262.4 160.4,253.3 159.7,262.5 159.0,259.4 158.3,260.6 157.6,262.3 156.9,260.6 156.2,262.5 155.5,254.1 154.8,249.1 154.1,261.0 153.4,261.7 152.7,260.9 152.0,250.1 151.3,262.4 150.6,261.8 149.9,257.9 149.2,261.3 148.5,263.7 147.8,263.5 147.1,261.8 146.4,261.1 145.7,263.3 145.0,264.0 144.3,262.7 143.6,260.4 142.9,260.1 142.2,263.5 141.5,262.5 140.8,262.0 140.1,261.9 139.4,264.4 138.7,262.4 138.0,257.1 137.3,261.7 136.6,262.2 135.9,258.5 135.2,250.1 134.5,254.4 133.8,256.4 133.1,262.9 132.3,253.7 131.6,257.9 130.9,260.8 130.2,255.2 129.5,258.2 128.8,257.5 128.1,262.1 127.4,262.5 126.7,258.9 126.0,258.7 125.3,262.2 124.6,262.8 123.9,260.5 123.2,254.6 122.5,257.1 121.8,261.9 121.1,263.0 120.4,262.5 119.7,257.5 119.0,262.2 118.3,261.9 117.6,262.6 116.9,261.1 116.2,259.7 115.5,260.7 114.8,258.3 114.1,262.9 113.4,248.1 112.7,261.1 112.0,263.4 111.3,256.6 110.6,260.5 109.9,257.6 109.2,261.7 108.5,259.4 107.8,259.0 107.1,256.0 106.4,237.7 105.7,240.5 105.0,252.7 104.3,255.3 103.6,259.6 102.9,262.1 102.2,262.4 101.5,261.9 100.8,262.2 100.1,257.8 99.4,262.2 98.7,252.8 98.0,262.7 97.3,262.7 96.6,251.4 95.9,263.7 95.2,263.1 94.5,261.8 93.8,263.0 93.1,263.4 92.4,262.5 91.7,253.4 91.0,263.0 90.3,258.6 89.6,244.7 88.9,250.8 88.2,249.8 87.5,263.8 86.8,261.5 86.1,246.5 85.4,262.1 84.7,261.6 84.0,254.5 83.3,261.4 82.6,257.6 81.9,259.0 81.2,262.5 80.5,253.3 79.8,250.6 79.1,261.0 78.4,261.7 77.7,263.0 77.0,261.0 76.3,263.0 75.6,263.8 74.9,258.0 74.2,263.5 73.5,263.7 72.8,263.5 72.1,248.4 71.4,262.6 70.7,260.5 70.0,251.9 69.3,259.8 68.6,259.1 67.9,263.6 67.2,263.2 66.5,261.4 65.8,262.6 65.1,263.5 64.4,262.2 63.7,257.3 63.0,261.4 62.3,261.2 61.6,263.3 60.9,261.4 60.2,260.4 59.5,261.2 58.8,260.5 58.1,253.0 57.4,258.5 56.7,262.0 56.0,263.0 55.3,263.7 54.6,263.7 53.9,262.8 53.2,263.0 52.5,262.2 51.8,263.5 51.1,262.3 50.4,261.5 49.7,261.3 49.0,262.8 48.3,262.1 47.5,260.5 46.8,262.4 46.1,262.0 45.4,264.1 44.7,252.9 44.0,262.8 43.3,256.2 42.6,255.5 41.9,261.6 41.2,262.8 40.5,259.2 39.8,261.0 39.1,256.3 38.4,264.0 37.7,256.7 37.0,260.9 36.3,251.7 35.6,262.2 34.9,261.6 34.2,262.7 33.5,263.2 32.8,261.4 32.1,263.4 31.4,262.0 30.7,263.3 30.0,263.0 29.3,261.9 28.6,259.4 27.9,253.4 27.2,260.3 26.5,261.4 25.8,255.8 25.1,262.4 24.4,261.9 23.7,256.0 23.0,262.6 22.3,255.6 21.6,262.4 20.9,262.4 20.2,261.8 19.5,262.9 18.8,262.0 18.1,262.1 17.4,253.2 16.7,261.0 16.0,263.8 15.3,263.3 14.6,246.5 13.9,256.0 13.2,258.0 12.5,264.2 11.8,257.1 11.1,262.8 10.4,259.9 9.7,263.2 9.0,259.1 8.3,261.2 7.6,263.9 6.9,261.4 6.2,262.6 5.5,257.8"/>
<path fill="#2f4048" d="M1.5,76.5 Q3,69.5 5.6,61.5 L5.6,101.5 Q3,93.5 1.5,86.5 Z"/>
<path fill="#2f4048" d="M352.5,68.5 L346,78.5 L344.5,51.5 L344,81.5 L344.5,111.5 L346,84.5 L352.5,94.5 Z"/>
<path fill="#2f4048" d="M1.5,207.5 Q3,200.5 5.6,192.5 L5.6,232.5 Q3,224.5 1.5,217.5 Z"/>
<path fill="#2f4048" d="M352.5,199.5 L346,209.5 L344.5,182.5 L344,212.5 L344.5,242.5 L346,215.5 L352.5,225.5 Z"/>
</svg>
<svg class="a" style="left:678px;top:112px" width="352" height="266" viewBox="0 0 352 266"><path fill="#f4f6f6" d="M0,0 L8,0 L0,8 Z M352,0 L344,0 L352,8 Z M0,263.5 L8,263.5 L0,255.5 Z"/></svg>
<svg class="a" style="left:677px;top:378px" width="474" height="436" viewBox="677 378 474 436" shape-rendering="crispEdges">
<line x1="677.5" y1="379" x2="677.5" y2="814" stroke="#7f9ba3" stroke-opacity=".9" stroke-width="1" stroke-dasharray="1 1"/>
<line x1="686.5" y1="379" x2="686.5" y2="814" stroke="#7f9ba3" stroke-opacity=".9" stroke-width="1" stroke-dasharray="1 1"/>
<line x1="695.5" y1="379" x2="695.5" y2="814" stroke="#7f9ba3" stroke-opacity=".9" stroke-width="1" stroke-dasharray="1 1"/>
<line x1="704.5" y1="379" x2="704.5" y2="814" stroke="#7f9ba3" stroke-opacity=".9" stroke-width="1" stroke-dasharray="1 1"/>
<line x1="713.5" y1="379" x2="713.5" y2="814" stroke="#7f9ba3" stroke-opacity=".9" stroke-width="1" stroke-dasharray="1 1"/>
<line x1="721.5" y1="379" x2="721.5" y2="814" stroke="#7f9ba3" stroke-opacity=".9" stroke-width="1" stroke-dasharray="1 1"/>
<line x1="730.5" y1="379" x2="730.5" y2="814" stroke="#7f9ba3" stroke-opacity=".9" stroke-width="1" stroke-dasharray="1 1"/>
<line x1="739.5" y1="379" x2="739.5" y2="814" stroke="#7f9ba3" stroke-opacity=".9" stroke-width="1" stroke-dasharray="1 1"/>
<line x1="748.5" y1="379" x2="748.5" y2="814" stroke="#7f9ba3" stroke-opacity=".9" stroke-width="1" stroke-dasharray="1 1"/>
<line x1="757.5" y1="379" x2="757.5" y2="814" stroke="#7f9ba3" stroke-opacity=".9" stroke-width="1" stroke-dasharray="1 1"/>
<line x1="765.5" y1="379" x2="765.5" y2="814" stroke="#7f9ba3" stroke-opacity=".9" stroke-width="1" stroke-dasharray="1 1"/>
<line x1="774.5" y1="379" x2="774.5" y2="814" stroke="#7f9ba3" stroke-opacity=".9" stroke-width="1" stroke-dasharray="1 1"/>
<line x1="783.5" y1="379" x2="783.5" y2="814" stroke="#7f9ba3" stroke-opacity=".9" stroke-width="1" stroke-dasharray="1 1"/>
<line x1="792.5" y1="379" x2="792.5" y2="814" stroke="#7f9ba3" stroke-opacity=".9" stroke-width="1" stroke-dasharray="1 1"/>
<line x1="801.5" y1="379" x2="801.5" y2="814" stroke="#7f9ba3" stroke-opacity=".9" stroke-width="1" stroke-dasharray="1 1"/>
<line x1="810.5" y1="379" x2="810.5" y2="814" stroke="#7f9ba3" stroke-opacity=".9" stroke-width="1" stroke-dasharray="1 1"/>
<line x1="818.5" y1="379" x2="818.5" y2="814" stroke="#7f9ba3" stroke-opacity=".9" stroke-width="1" stroke-dasharray="1 1"/>
<line x1="827.5" y1="379" x2="827.5" y2="814" stroke="#7f9ba3" stroke-opacity=".9" stroke-width="1" stroke-dasharray="1 1"/>
<line x1="836.5" y1="379" x2="836.5" y2="814" stroke="#7f9ba3" stroke-opacity=".9" stroke-width="1" stroke-dasharray="1 1"/>
<line x1="845.5" y1="379" x2="845.5" y2="814" stroke="#7f9ba3" stroke-opacity=".9" stroke-width="1" stroke-dasharray="1 1"/>
<line x1="854.5" y1="379" x2="854.5" y2="814" stroke="#7f9ba3" stroke-opacity=".9" stroke-width="1" stroke-dasharray="1 1"/>
<line x1="862.5" y1="379" x2="862.5" y2="814" stroke="#7f9ba3" stroke-opacity=".9" stroke-width="1" stroke-dasharray="1 1"/>
<line x1="871.5" y1="379" x2="871.5" y2="814" stroke="#7f9ba3" stroke-opacity=".9" stroke-width="1" stroke-dasharray="1 1"/>
<line x1="880.5" y1="379" x2="880.5" y2="814" stroke="#7f9ba3" stroke-opacity=".9" stroke-width="1" stroke-dasharray="1 1"/>
<line x1="889.5" y1="379" x2="889.5" y2="814" stroke="#7f9ba3" stroke-opacity=".9" stroke-width="1" stroke-dasharray="1 1"/>
<line x1="898.5" y1="379" x2="898.5" y2="814" stroke="#7f9ba3" stroke-opacity=".9" stroke-width="1" stroke-dasharray="1 1"/>
<line x1="906.5" y1="379" x2="906.5" y2="814" stroke="#7f9ba3" stroke-opacity=".9" stroke-width="1" stroke-dasharray="1 1"/>
<line x1="915.5" y1="379" x2="915.5" y2="814" stroke="#7f9ba3" stroke-opacity=".9" stroke-width="1" stroke-dasharray="1 1"/>
<line x1="924.5" y1="379" x2="924.5" y2="814" stroke="#7f9ba3" stroke-opacity=".9" stroke-width="1" stroke-dasharray="1 1"/>
<line x1="933.5" y1="379" x2="933.5" y2="814" stroke="#7f9ba3" stroke-opacity=".9" stroke-width="1" stroke-dasharray="1 1"/>
<line x1="942.5" y1="379" x2="942.5" y2="814" stroke="#7f9ba3" stroke-opacity=".9" stroke-width="1" stroke-dasharray="1 1"/>
<line x1="951.5" y1="379" x2="951.5" y2="814" stroke="#7f9ba3" stroke-opacity=".9" stroke-width="1" stroke-dasharray="1 1"/>
<line x1="959.5" y1="379" x2="959.5" y2="814" stroke="#7f9ba3" stroke-opacity=".9" stroke-width="1" stroke-dasharray="1 1"/>
<line x1="968.5" y1="379" x2="968.5" y2="814" stroke="#7f9ba3" stroke-opacity=".9" stroke-width="1" stroke-dasharray="1 1"/>
<line x1="977.5" y1="379" x2="977.5" y2="814" stroke="#7f9ba3" stroke-opacity=".9" stroke-width="1" stroke-dasharray="1 1"/>
<line x1="986.5" y1="379" x2="986.5" y2="814" stroke="#7f9ba3" stroke-opacity=".9" stroke-width="1" stroke-dasharray="1 1"/>
<line x1="995.5" y1="379" x2="995.5" y2="814" stroke="#7f9ba3" stroke-opacity=".9" stroke-width="1" stroke-dasharray="1 1"/>
<line x1="1003.5" y1="379" x2="1003.5" y2="814" stroke="#7f9ba3" stroke-opacity=".9" stroke-width="1" stroke-dasharray="1 1"/>
<line x1="1012.5" y1="379" x2="1012.5" y2="814" stroke="#7f9ba3" stroke-opacity=".9" stroke-width="1" stroke-dasharray="1 1"/>
<line x1="1021.5" y1="379" x2="1021.5" y2="814" stroke="#7f9ba3" stroke-opacity=".9" stroke-width="1" stroke-dasharray="1 1"/>
<line x1="1030.5" y1="379" x2="1030.5" y2="814" stroke="#7f9ba3" stroke-opacity=".9" stroke-width="1" stroke-dasharray="1 1"/>
<line x1="1039.5" y1="379" x2="1039.5" y2="814" stroke="#7f9ba3" stroke-opacity=".9" stroke-width="1" stroke-dasharray="1 1"/>
<line x1="1047.5" y1="379" x2="1047.5" y2="814" stroke="#7f9ba3" stroke-opacity=".9" stroke-width="1" stroke-dasharray="1 1"/>
<line x1="1056.5" y1="379" x2="1056.5" y2="814" stroke="#7f9ba3" stroke-opacity=".9" stroke-width="1" stroke-dasharray="1 1"/>
<line x1="1065.5" y1="379" x2="1065.5" y2="814" stroke="#7f9ba3" stroke-opacity=".9" stroke-width="1" stroke-dasharray="1 1"/>
<line x1="1074.5" y1="379" x2="1074.5" y2="814" stroke="#7f9ba3" stroke-opacity=".9" stroke-width="1" stroke-dasharray="1 1"/>
<line x1="1083.5" y1="379" x2="1083.5" y2="814" stroke="#7f9ba3" stroke-opacity=".9" stroke-width="1" stroke-dasharray="1 1"/>
<line x1="1092.5" y1="379" x2="1092.5" y2="814" stroke="#7f9ba3" stroke-opacity=".9" stroke-width="1" stroke-dasharray="1 1"/>
<line x1="1100.5" y1="379" x2="1100.5" y2="814" stroke="#7f9ba3" stroke-opacity=".9" stroke-width="1" stroke-dasharray="1 1"/>
<line x1="1109.5" y1="379" x2="1109.5" y2="814" stroke="#7f9ba3" stroke-opacity=".9" stroke-width="1" stroke-dasharray="1 1"/>
<line x1="1118.5" y1="379" x2="1118.5" y2="814" stroke="#7f9ba3" stroke-opacity=".9" stroke-width="1" stroke-dasharray="1 1"/>
<line x1="1127.5" y1="379" x2="1127.5" y2="814" stroke="#7f9ba3" stroke-opacity=".9" stroke-width="1" stroke-dasharray="1 1"/>
<line x1="1136.5" y1="379" x2="1136.5" y2="814" stroke="#7f9ba3" stroke-opacity=".9" stroke-width="1" stroke-dasharray="1 1"/>
<line x1="1144.5" y1="379" x2="1144.5" y2="814" stroke="#7f9ba3" stroke-opacity=".9" stroke-width="1" stroke-dasharray="1 1"/>
</svg>
<svg class="a" style="left:677px;top:63px" width="474" height="34" viewBox="0 0 474 34">
<rect x="0" y="29" width="1" height="5" fill="#8f9999"/>
<rect x="9" y="29" width="1" height="5" fill="#8f9999"/>
<rect x="18" y="29" width="1" height="5" fill="#8f9999"/>
<rect x="27" y="29" width="1" height="5" fill="#8f9999"/>
<rect x="36" y="29" width="1" height="5" fill="#8f9999"/>
<rect x="44" y="29" width="1" height="5" fill="#8f9999"/>
<rect x="53" y="29" width="1" height="5" fill="#8f9999"/>
<rect x="62" y="29" width="1" height="5" fill="#8f9999"/>
<rect x="71" y="29" width="1" height="5" fill="#8f9999"/>
<rect x="80" y="29" width="1" height="5" fill="#8f9999"/>
<rect x="88" y="29" width="1" height="5" fill="#8f9999"/>
<rect x="97" y="29" width="1" height="5" fill="#8f9999"/>
<rect x="106" y="29" width="1" height="5" fill="#8f9999"/>
<rect x="115" y="29" width="1" height="5" fill="#8f9999"/>
<rect x="124" y="29" width="1" height="5" fill="#8f9999"/>
<rect x="133" y="29" width="1" height="5" fill="#8f9999"/>
<rect x="141" y="29" width="1" height="5" fill="#8f9999"/>
<rect x="150" y="29" width="1" height="5" fill="#8f9999"/>
<rect x="159" y="29" width="1" height="5" fill="#8f9999"/>
<rect x="168" y="29" width="1" height="5" fill="#8f9999"/>
<rect x="177" y="29" width="1" height="5" fill="#8f9999"/>
<rect x="185" y="29" width="1" height="5" fill="#8f9999"/>
<rect x="194" y="29" width="1" height="5" fill="#8f9999"/>
<rect x="203" y="29" width="1" height="5" fill="#8f9999"/>
<rect x="212" y="29" width="1" height="5" fill="#8f9999"/>
<rect x="221" y="29" width="1" height="5" fill="#8f9999"/>
<rect x="229" y="29" width="1" height="5" fill="#8f9999"/>
<rect x="238" y="29" width="1" height="5" fill="#8f9999"/>
<rect x="247" y="29" width="1" height="5" fill="#8f9999"/>
<rect x="256" y="29" width="1" height="5" fill="#8f9999"/>
<rect x="265" y="29" width="1" height="5" fill="#8f9999"/>
<rect x="274" y="29" width="1" height="5" fill="#8f9999"/>
<rect x="282" y="29" width="1" height="5" fill="#8f9999"/>
<rect x="291" y="29" width="1" height="5" fill="#8f9999"/>
<rect x="300" y="29" width="1" height="5" fill="#8f9999"/>
<rect x="309" y="29" width="1" height="5" fill="#8f9999"/>
<rect x="318" y="29" width="1" height="5" fill="#8f9999"/>
<rect x="326" y="29" width="1" height="5" fill="#8f9999"/>
<rect x="335" y="29" width="1" height="5" fill="#8f9999"/>
<rect x="344" y="29" width="1" height="5" fill="#8f9999"/>
<rect x="353" y="29" width="1" height="5" fill="#8f9999"/>
<rect x="362" y="29" width="1" height="5" fill="#8f9999"/>
<rect x="370" y="29" width="1" height="5" fill="#8f9999"/>
<rect x="379" y="29" width="1" height="5" fill="#8f9999"/>
<rect x="388" y="29" width="1" height="5" fill="#8f9999"/>
<rect x="397" y="29" width="1" height="5" fill="#8f9999"/>
<rect x="406" y="29" width="1" height="5" fill="#8f9999"/>
<rect x="415" y="29" width="1" height="5" fill="#8f9999"/>
<rect x="423" y="29" width="1" height="5" fill="#8f9999"/>
<rect x="432" y="29" width="1" height="5" fill="#8f9999"/>
<rect x="441" y="29" width="1" height="5" fill="#8f9999"/>
<rect x="450" y="29" width="1" height="5" fill="#8f9999"/>
<rect x="459" y="29" width="1" height="5" fill="#8f9999"/>
<rect x="467" y="29" width="1" height="5" fill="#8f9999"/>
<rect x="0" y="3" width="1.3" height="31" fill="#9aa4a4"/>
<rect x="3.5" y="14.6" width="51" height="1.1" fill="#aab2b2"/>
<rect x="141" y="3" width="1.3" height="31" fill="#9aa4a4"/>
<rect x="144.5" y="14.6" width="51" height="1.1" fill="#aab2b2"/>
<rect x="282" y="3" width="1.3" height="31" fill="#9aa4a4"/>
<rect x="285.5" y="14.6" width="51" height="1.1" fill="#aab2b2"/>
<rect x="423" y="3" width="1.3" height="31" fill="#9aa4a4"/>
<rect x="426.5" y="14.6" width="51" height="1.1" fill="#aab2b2"/>
</svg>
<div class="rl" style="left:681.5px;top:65.8px;letter-spacing:1.25px">1.1.00</div>
<div class="rl" style="left:681.5px;top:79.1px;font-size:10.5px;letter-spacing:1.1px">0:00.000</div>
<div class="rl" style="left:822.5px;top:65.8px;letter-spacing:1.25px">33.1.00</div>
<div class="rl" style="left:822.5px;top:79.1px;font-size:10.5px;letter-spacing:1.1px">1:25.333</div>
<div class="rl" style="left:963.5px;top:65.8px;letter-spacing:1.25px">65.1.00</div>
<div class="rl" style="left:963.5px;top:79.1px;font-size:10.5px;letter-spacing:1.1px">2:50.666</div>
<div class="rl" style="left:1104.5px;top:65.8px;letter-spacing:1.25px">97.1.00</div>
<div class="rl" style="left:1104.5px;top:79.1px;font-size:10.5px;letter-spacing:1.1px">4:16.000</div>
<svg class="a" style="left:677px;top:97px" width="120" height="15" viewBox="0 0 120 15">
<circle cx="8.6" cy="6.8" r="5" fill="none" stroke="#c23030" stroke-width="1.3"/><path d="M8.6,3.5 V7 H10.6" stroke="#c23030" stroke-width="1" fill="none"/>
<rect x="19.7" y="1" width="12.2" height="11.6" rx="3.6" fill="#ccd6d6" stroke="#1c2424" stroke-width="1.1"/>
<rect x="34.7" y="1" width="12.2" height="11.6" rx="3.6" fill="#ccd6d6" stroke="#1c2424" stroke-width="1.1"/>
<rect x="49.3" y="1" width="12.2" height="11.6" rx="3.6" fill="#ccd6d6" stroke="#1c2424" stroke-width="1.1"/>
<rect x="64.5" y="1" width="12.2" height="11.6" rx="3.6" fill="#ccd6d6" stroke="#1c2424" stroke-width="1.1"/>
<rect x="79" y="1" width="12.2" height="11.6" rx="3.6" fill="#ccd6d6" stroke="#1c2424" stroke-width="1.1"/>
<rect x="23.6" y="6.3" width="6.6" height="4.6" fill="#1c2424"/><path d="M22.2,7.4 V5 Q22.2,3.2 24.2,3.2 Q26.2,3.2 26.2,5 V6.3" stroke="#1c2424" stroke-width="1.2" fill="none"/>
<text x="40.9" y="9.5" font-size="9" font-family="Liberation Sans, sans-serif" text-anchor="middle" fill="#1c2424">m</text>
<path d="M52.2,4.6 H58.8 M52.2,7 H58.8 M52.2,9.4 H58.8" stroke="#1c2424" stroke-width="1"/>
<circle cx="70.7" cy="3.9" r="1.2" fill="#1c2424"/><path d="M69.3,6 H71.7 V10.6 M69,10.8 H73" stroke="#1c2424" stroke-width="1.5" fill="none"/>
<text x="85.2" y="10" font-size="8.5" font-family="Liberation Sans, sans-serif" text-anchor="middle" fill="#1c2424">fx</text>
<rect x="94.5" y="0.5" width="13.2" height="13.4" fill="#000"/><rect x="95.6" y="1.6" width="11" height="11.2" fill="#fff"/><path d="M96.6,10.6 L99.8,5.4 H102.2 L106,8.8" stroke="#000" stroke-width="2" fill="none" stroke-linejoin="miter"/>
</svg>
<div class="t" style="left:789.3px;top:97.5px;font-size:11px;line-height:13px;transform:scaleX(.983);color:#1a2020">[-2.10dB] Скриптонит - Дома [gazgolder.com].mp</div>
<div class="a" style="left:726.2px;top:97px;width:1.6px;height:717px;background:rgba(30,38,38,.72)"></div>
<div class="a" style="left:695px;top:70px;width:1px;height:744px;background:#7c1f22"></div>
<svg class="a" style="left:685px;top:63px" width="22" height="12" viewBox="0 0 22 12"><path d="M2.6,2.2 H18.6 L10.6,10.6 Z" fill="#4a1416" stroke="#f2f2f2" stroke-width="1.1" stroke-linejoin="miter"/></svg>
<div class="a" style="left:1111px;top:798px;width:40px;height:16px;background:#000;color:#fff;font-family:'Liberation Mono',monospace;font-weight:bold;font-size:11px;line-height:16px;letter-spacing:1px;padding-left:5px">0:00</div>
<!-- ============ mixer ============ -->
<div class="a" id="master" style="left:-4px;top:428px;width:94px;height:282.5px;background:#2f4048;border-radius:0 0 4px 0;box-shadow:1px 1px 0 #141a19"></div>
<div class="a" style="left:64px;top:515px;width:24px;height:157px;background:linear-gradient(#2c3c44 0,#2c3c44 80px,#283439 80px,#283439 100%)"></div>
<div class="a" style="left:-4px;top:672px;width:94px;height:38.5px;background:#2a373c;border-radius:0 0 4px 0"></div>
<div class="a" style="left:15px;top:449px;width:9px;height:222px;background:linear-gradient(#e87a12 0,#e07e14 15.6px,#cf8a1c 15.6px,#cf8a1c 25.9px,#b89828 25.9px,#b89828 36.2px,#98aa30 36.2px,#96aa32 90.4px,#7eb04c 90.4px,#7cb04e 147.9px,#6ab468 147.9px,#68b46a 184.7px,#5cba80 184.7px,#5cba80 223px)"></div>
<div class="a" style="left:36px;top:448px;width:9px;height:223px;background:linear-gradient(#e87a12 0,#e07e14 15.6px,#cf8a1c 15.6px,#cf8a1c 25.9px,#b89828 25.9px,#b89828 36.2px,#98aa30 36.2px,#96aa32 90.4px,#7eb04c 90.4px,#7cb04e 147.9px,#6ab468 147.9px,#68b46a 184.7px,#5cba80 184.7px,#5cba80 223px)"></div>
<div class="a" style="left:6px;top:473px;width:4px;height:198px;background:#10f020"></div>
<div class="a" style="left:50px;top:472px;width:4px;height:199px;background:#10f020"></div>
<div class="ml" style="left:15px;width:30px;top:432.9px;font-size:9px;text-shadow:1px 1px 0 #10181a">-12-</div>
<div class="ml" style="left:15px;width:30px;top:452.2px;font-size:9px;text-shadow:1px 1px 0 #10181a">-18-</div>
<div class="ml" style="left:15px;width:30px;top:470.6px;font-size:9px;text-shadow:1px 1px 0 #10181a">-24-</div>
<div class="ml" style="left:15px;width:30px;top:489.0px;font-size:9px;text-shadow:1px 1px 0 #10181a">-30-</div>
<div class="ml" style="left:15px;width:30px;top:507.0px;font-size:9px;text-shadow:1px 1px 0 #10181a">-36-</div>
<div class="ml" style="left:15px;width:30px;top:525.6px;font-size:9px;text-shadow:1px 1px 0 #10181a">-42-</div>
<div class="ml" style="left:15px;width:30px;top:544.0px;font-size:9px;text-shadow:1px 1px 0 #10181a">-48-</div>
<div class="ml" style="left:15px;width:30px;top:562.5px;font-size:9px;text-shadow:1px 1px 0 #10181a">-54-</div>
<div class="ml" style="left:15px;width:30px;top:581.0px;font-size:9px;text-shadow:1px 1px 0 #10181a">-60-</div>
<div class="ml" style="left:15px;width:30px;top:599.5px;font-size:9px;text-shadow:1px 1px 0 #10181a">-66-</div>
<div class="ml" style="left:15px;width:30px;top:618.0px;font-size:9px;text-shadow:1px 1px 0 #10181a">-72-</div>
<div class="ml" style="left:15px;width:30px;top:636.5px;font-size:9px;text-shadow:1px 1px 0 #10181a">-78-</div>
<div class="ml" style="left:15px;width:30px;top:655.0px;font-size:9px;text-shadow:1px 1px 0 #10181a">-84-</div>
<div class="ml" style="left:2px;width:22px;top:662px;font-size:10px;text-shadow:1px 1px 0 #10181a">-0.1</div>
<div class="ml" style="left:36px;width:22px;top:662px;font-size:10px;text-shadow:1px 1px 0 #10181a">+1.3</div>
<div class="sb" style="left:70px;top:424px;width:17px;height:16px;line-height:16px;font-size:8px;text-shadow:0 0 .6px #fff">env</div>
<div class="sb" style="left:70px;top:445px;width:17px;height:16px;font-size:10px;line-height:13px">fx</div>
<div class="a" style="left:73px;top:464px;width:10px;height:10px;border-radius:5px;border:2px solid #3e4e56;background:#2a383f"></div>
<div class="a" style="left:-2px;top:682px;width:83px;height:4.5px;border-radius:2px;background:linear-gradient(#1c2529,#4c5c63)"></div>
<div class="a" style="left:25px;top:677px;width:11px;height:13px;border-radius:3px;background:linear-gradient(90deg,#b4baba,#d4d8d8 35%,#8c9292);border:1px solid #4c5458"></div><div class="a" style="left:30px;top:677px;width:1.3px;height:15px;background:#1a1e1e"></div>
<div class="a" style="left:-5.5px;top:695px;font-size:9.5px;line-height:12px;color:#66787f;letter-spacing:.3px;white-space:nowrap">0.00dB center</div>
<div class="a" id="strip" style="left:92px;top:428px;width:70px;height:268px;background:linear-gradient(#d3d8d8 0,#d2d7d7 239px,#c8cfcf 240px,#c6cdcd 100%);border-radius:0 0 5px 5px;box-shadow:0 1px 0 #101514"></div>
<div class="a" style="left:90px;top:428px;width:2px;height:268px;background:#2a3434"></div>
<div class="a" style="left:102px;top:428px;width:6.5px;height:223px;border-radius:0 0 3px 3px;background:linear-gradient(90deg,#a9b0b0 0,#a9b0b0 72%,#8d9595 80%,#8d9595 100%)"></div>
<div class="a" style="left:97px;top:499px;width:17px;height:1px;background:#6f7777"></div>
<div class="a" style="left:97px;top:530px;width:17px;height:28px;border-radius:4px;border:1px solid #858c8c;background:linear-gradient(#d8dada 0,#fafafa 25%,#f2f2f2 48%,#c2c6c6 52%,#dadcdc 100%);box-shadow:0 1px 2px rgba(0,0,0,.35)"></div><div class="a" style="left:100.5px;top:543.8px;width:10.5px;height:1.2px;background:#1a1a1a"></div>
<div class="a" style="left:117px;top:428px;width:22px;height:229.5px;background:#2f4048"></div>
<div class="a" style="left:137px;top:428px;width:2px;height:49px;background:#6a2a10"></div><div class="a" style="left:137px;top:477px;width:2px;height:180px;background:#3a4a24"></div>
<div class="a" style="left:117.8px;top:448px;width:1.3px;height:209px;background:linear-gradient(#e07a18 0,#d89020 25px,#a8a42c 45px,#88ae3c 110px,#6cb45c 175px,#5cba6c 210px)"></div>
<div class="a" style="left:120.6px;top:448px;width:1.3px;height:209px;background:linear-gradient(#e07a18 0,#d89020 25px,#a8a42c 45px,#88ae3c 110px,#6cb45c 175px,#5cba6c 210px)"></div>
<div class="ml" style="left:117.5px;width:20px;top:436.9px;color:#eef0f0;font-size:8.8px">-12-</div>
<div class="ml" style="left:117.5px;width:20px;top:454.1px;color:#e8ecec;font-size:8.8px">-18-</div>
<div class="ml" style="left:117.5px;width:20px;top:471.6px;color:#e0e4e4;font-size:8.8px">-24-</div>
<div class="ml" style="left:117.5px;width:20px;top:488.0px;color:#d6dada;font-size:8.8px">-30-</div>
<div class="ml" style="left:117.5px;width:20px;top:505.0px;color:#ccd2d2;font-size:8.8px">-36-</div>
<div class="ml" style="left:117.5px;width:20px;top:522.0px;color:#c2c8c8;font-size:8.8px">-42-</div>
<div class="ml" style="left:117.5px;width:20px;top:539.0px;color:#b6bebe;font-size:8.8px">-48-</div>
<div class="ml" style="left:117.5px;width:20px;top:556.0px;color:#aab2b2;font-size:8.8px">-54-</div>
<div class="ml" style="left:117.5px;width:20px;top:573.0px;color:#9ea8a8;font-size:8.8px">-60-</div>
<div class="ml" style="left:117.5px;width:20px;top:590.5px;color:#929c9c;font-size:8.8px">-66-</div>
<div class="ml" style="left:117.5px;width:20px;top:607.5px;color:#869292;font-size:8.8px">-72-</div>
<div class="ml" style="left:117.5px;width:20px;top:624.5px;color:#7a8888;font-size:8.8px">-78-</div>
<div class="ml" style="left:117.5px;width:20px;top:641.5px;color:#6e7c7c;font-size:8.8px">-84-</div>
<div class="sb" style="left:143px;top:433.5px;font-size:8px;letter-spacing:-.3px;text-shadow:0 0 .6px #fff">env</div>
<div class="sb" style="left:143px;top:453px;background:radial-gradient(ellipse at 50% 65%,#1a9c52,#076129);box-shadow:inset 0 0 0 1px #0e7a3c;color:#fff;font-size:10px">fx</div>
<div class="a" style="left:145.5px;top:470px;width:12px;height:12px;border-radius:6px;background:radial-gradient(circle closest-side at 50% 50%,#b4ff9a 0,#30d825 26%,#167018 46%,#26342b 54%,#26342b 68%,rgba(38,52,43,0) 74%)"></div>
<div class="sb" style="left:143px;top:604.5px;background:#4f3133;box-shadow:inset 0 0 0 1px #6c4c4e;color:#f0e6e6;font-size:11px;line-height:10px">ar</div>
<div class="sb" style="left:143px;top:624px;background:#a4acac;box-shadow:inset 0 0 0 1px #c0c6c6;border-color:#6c7476"><svg width="14" height="13" viewBox="0 0 14 13" style="position:absolute;left:0;top:0"><path d="M3.5,5.2 H5.5 L8.8,2.8 V10 L5.5,7.6 H3.5 Z" fill="none" stroke="#5a6264" stroke-width="1"/></svg></div>
<div class="sb" style="left:143px;top:643.5px;background:#a4acac;box-shadow:inset 0 0 0 1px #c0c6c6;border-color:#6c7476;color:#2c3436;font-size:10px;line-height:12px">in</div>
<div class="a" style="left:101px;top:668px;width:52px;height:3.5px;border-radius:2px;background:linear-gradient(#9aa2a2,#c6cccc);box-shadow:0 1px 0 #e8ecec"></div>
<div class="a" style="left:122px;top:662px;width:11.5px;height:17px;border-radius:3px;background:linear-gradient(90deg,#c4caca,#e0e3e3 35%,#9aa1a1);border:1px solid #858d8d;box-shadow:0 1px 1px rgba(0,0,0,.25)"></div><div class="a" style="left:127.5px;top:662px;width:1px;height:17px;background:#222"></div>
<div class="a" style="left:98px;top:681px;font-size:9.5px;line-height:12px;color:#20282a;letter-spacing:0;white-space:nowrap">-10.7dBcenter</div>
<div class="a" style="left:93px;top:699px;width:15px;height:12px;border-radius:3px;background:#2f4048;border:1px solid #3f5058"></div>
<div class="a" style="left:146px;top:699px;width:15px;height:12px;border-radius:3px;background:#2f4048;border:1px solid #3f5058"></div>
<div class="a" style="left:110px;top:699px;width:33.5px;height:12px;border-radius:3px;background:linear-gradient(90deg,#a6aeae 0,#a6aeae 66%,#5f696b 66%,#5f696b 72%,#b0b8b8 72%);border:1px solid #7a8484"></div>
<svg class="a" style="left:93px;top:699px" width="70" height="13" viewBox="0 0 70 13"><path d="M10,3 V10 L4.5,6.5 Z M58,3 V10 L63.5,6.5 Z" fill="#b8c4c8"/><path d="M24,4.5 V8.5 L21,6.5 Z M42.5,4.5 V8.5 L45.5,6.5 Z" fill="#7f8a8a"/></svg>
<div class="a" style="left:0;top:713px;width:165px;height:3px;background:#28343a"></div>
<div class="a" style="left:163.8px;top:432px;width:3.3px;height:382px;background:#28343a"></div>
<!-- ============ bottom lists ============ -->
<div class="a" style="left:-2px;top:722.8px;width:62px;height:93px;background:#f8f8f8;border:1px solid #a8acac"></div>
<div class="t" style="left:-5.5px;top:726px;font-size:12.2px;transform:scaleX(.93);color:#111">gins</div>
<div class="t" style="left:0px;top:742px;font-size:12.2px;transform:scaleX(.93);color:#111">T</div>
<div class="t" style="left:0px;top:758px;font-size:12.2px;transform:scaleX(.93);color:#111">Ti</div>
<div class="t" style="left:0px;top:774px;font-size:12.2px;transform:scaleX(.93);color:#111">T3</div>
<div class="t" style="left:0px;top:790px;font-size:12.2px;transform:scaleX(.93);color:#111">T3i</div>
<div class="a" style="left:45px;top:742px;width:12px;height:33px;background:#c1c9c9"></div>
<svg class="a" style="left:45px;top:728px" width="12" height="10" viewBox="0 0 12 10"><path d="M2,7.5 L6,3.5 L10,7.5" fill="none" stroke="#444" stroke-width="1.4"/></svg>
<div class="a" style="left:63.8px;top:722.8px;width:92.2px;height:93px;background:#f8f8f8;border:1px solid #a8acac"></div>
<div class="t" style="left:68px;top:725.7px;font-size:11px;line-height:13px;transform:scaleX(.95);color:#111">JS: 3-Band Joiner</div>
<div class="t" style="left:68px;top:739.9px;font-size:11px;line-height:13px;transform:scaleX(.95);color:#111">JS: 4-Band Joiner</div>
<div class="t" style="left:68px;top:754.1px;font-size:11px;line-height:13px;transform:scaleX(.95);color:#111">JS: 5-Band Joiner</div>
<!-- ============ ReaEQ FX window ============ -->
<div class="a" id="dlg" style="left:-6px;top:20px;width:524.2px;height:412px;background:#7fb0d0;box-shadow:0 0 0 1px rgba(90,120,140,.45)"></div>
<div class="a" id="dlgbody" style="left:0;top:47px;width:515px;height:381px;background:#f7f7f7"></div>
<div class="t" style="left:19px;top:23px;font-size:15px;line-height:19px;transform:scaleX(0.947);color:#1a2530">VST:</div>
<div class="t" style="left:52px;top:23px;font-size:15px;line-height:19px;transform:scaleX(0.874);color:#1a2530">ReaEQ</div>
<div class="t" style="left:98.5px;top:23px;font-size:15px;line-height:19px;transform:scaleX(0.942);color:#1a2530">(Cockos)</div>
<div class="t" style="left:160px;top:23px;font-size:15px;line-height:19px;transform:scaleX(1.000);color:#1a2530">-</div>
<div class="t" style="left:171px;top:23px;font-size:15px;line-height:19px;transform:scaleX(0.920);color:#1a2530">Track</div>
<div class="t" style="left:209px;top:23px;font-size:15px;line-height:19px;transform:scaleX(1.000);color:#1a2530">1</div>
<div class="t" style="left:220px;top:23px;font-size:15px;line-height:19px;transform:scaleX(1.045);color:#1a2530">"Скриптонит</div>
<div class="t" style="left:315px;top:23px;font-size:15px;line-height:19px;transform:scaleX(1.000);color:#1a2530">–</div>
<div class="t" style="left:325px;top:23px;font-size:15px;line-height:19px;transform:scaleX(0.965);color:#1a2530">Дома</div>
<div class="t" style="left:367.5px;top:23px;font-size:15px;line-height:19px;transform:scaleX(0.980);color:#1a2530">[gazgolder.com]"</div>
<svg class="a" style="left:475px;top:22px" width="16" height="18" viewBox="0 0 16 18"><path d="M4.2,1.5 H11.8 V3 H10.6 V7.6 Q13.2,8.4 13.4,10.4 H8.6 V16.5 H7.4 V10.4 H2.6 Q2.8,8.4 5.4,7.6 V3 H4.2 Z" fill="#fff"/></svg>
<div class="a" style="left:495px;top:22px;width:19px;height:19px;background:#c75050"></div>
<svg class="a" style="left:495px;top:22px" width="19" height="19" viewBox="0 0 19 19"><path d="M6.6,7.2 L11.6,12.2 M11.6,7.2 L6.6,12.2" stroke="#fff" stroke-width="1.9"/></svg>
<div class="a" style="left:-4px;top:50px;width:292px;height:19px;border:1px solid #acacac;background:linear-gradient(#efefef,#e4e4e4)"></div>
<div class="a" style="left:-4px;top:52px;width:274.5px;height:15px;border:1px dotted #111"></div>
<div class="t" style="left:-3.5px;top:52.5px">No preset</div>
<svg class="a" style="left:274px;top:55px" width="12" height="10" viewBox="0 0 12 10"><path d="M2,2.5 L6,7 L10,2.5" fill="none" stroke="#444" stroke-width="1.5"/></svg>
<div class="btn" style="left:293px;top:50px;width:16px;height:18px;"><div class="t" style="left:3.5px;top:1px">+</div></div>
<div class="btn" style="left:314px;top:50px;width:43px;height:18px;"><div class="t" style="left:5px;top:1px">Param</div></div>
<div class="btn" style="left:362px;top:50px;width:73px;height:18px;border-color:#7eb4ea;background:#e5f1fb;"><div class="t" style="left:12.5px;top:1px">2 in 2 out</div></div>
<div class="btn" style="left:440px;top:50px;width:23.5px;height:18px;"><div class="t" style="left:4.7px;top:1px">UI</div></div>
<svg class="a" style="left:468px;top:49px" width="22" height="22" viewBox="0 0 22 22"><circle cx="10.6" cy="10.3" r="8.2" fill="#fafafa" stroke="#111" stroke-width="1.2"/><path d="M10.8,10.8 L13.6,17.2" stroke="#111" stroke-width="1.2"/></svg>
<div class="cb" style="left:495px;top:52px"><svg width="11" height="11" viewBox="0 0 11 11"><path d="M1.8,4.9 L4.4,8.1 L9.4,1.9" fill="none" stroke="#0a0a0a" stroke-width="2.1"/></svg></div>
<div class="a" style="left:-4px;top:79.7px;width:514.5px;height:340.6px;border:1px solid #d5dfe5"></div>
<div class="a" style="left:-3px;top:72px;width:36px;height:16px;background:#f7f7f7"></div>
<div class="t" style="left:-4px;top:73px">ReaEQ</div>
<svg class="a" style="left:0;top:92px" width="464" height="120" viewBox="0 0 464 120" font-family="Liberation Sans, sans-serif">
<rect width="464" height="120" fill="#000"/>
<rect x="29.95" y="0" width="1.1" height="120" fill="#737373"/>
<rect x="63.95" y="0" width="1.1" height="120" fill="#737373"/>
<rect x="105.95" y="0" width="1.1" height="120" fill="#737373"/>
<rect x="132.75" y="0" width="1.1" height="120" fill="#737373"/>
<rect x="152.75" y="0" width="1.1" height="108" fill="#737373"/>
<rect x="168.95" y="0" width="1.1" height="120" fill="#737373"/>
<rect x="181.75" y="0" width="1.1" height="108" fill="#737373"/>
<rect x="192.75" y="0" width="1.1" height="108" fill="#737373"/>
<rect x="202.45" y="0" width="1.1" height="108" fill="#737373"/>
<rect x="211.75" y="0" width="1.1" height="108" fill="#737373"/>
<rect x="219.75" y="0" width="1.1" height="120" fill="#737373"/>
<rect x="271.75" y="0" width="1.1" height="120" fill="#737373"/>
<rect x="303.05" y="0" width="1.1" height="120" fill="#737373"/>
<rect x="324.95" y="0" width="1.1" height="108" fill="#737373"/>
<rect x="341.85" y="0" width="1.1" height="120" fill="#737373"/>
<rect x="355.95" y="0" width="1.1" height="108" fill="#737373"/>
<rect x="367.75" y="0" width="1.1" height="108" fill="#737373"/>
<rect x="378.15" y="0" width="1.1" height="108" fill="#737373"/>
<rect x="387.65" y="0" width="1.1" height="108" fill="#737373"/>
<rect x="395.95" y="0" width="1.1" height="120" fill="#737373"/>
<rect x="403.25" y="0" width="1.1" height="108" fill="#737373"/>
<rect x="409.85" y="0" width="1.1" height="108" fill="#737373"/>
<rect x="415.85" y="0" width="1.1" height="108" fill="#737373"/>
<rect x="421.65" y="0" width="1.1" height="108" fill="#737373"/>
<rect x="426.95" y="0" width="1.1" height="108" fill="#737373"/>
<rect x="449.45" y="0" width="1.1" height="120" fill="#737373"/>
<rect x="457.75" y="0" width="1.1" height="120" fill="#737373"/>
<rect x="0" y="29.85" width="464" height="1.1" fill="#737373"/>
<rect x="0" y="89.75" width="464" height="1.1" fill="#737373"/>
<text x="2.8" y="28" font-size="8.6" fill="#c4c4c4">+6</text>
<text x="2.8" y="58" font-size="8.6" fill="#c4c4c4">+0</text>
<text x="2.8" y="88" font-size="8.6" fill="#c4c4c4">-6</text>
<text x="29" y="118" font-size="9" fill="#a8a8a8" text-anchor="end">50</text>
<text x="63" y="118" font-size="9" fill="#a8a8a8" text-anchor="end">100</text>
<text x="105" y="118" font-size="9" fill="#a8a8a8" text-anchor="end">200</text>
<text x="131.5" y="118" font-size="9" fill="#a8a8a8" text-anchor="end">300</text>
<text x="168" y="118" font-size="9" fill="#a8a8a8" text-anchor="end">500</text>
<text x="219.5" y="118" font-size="9" fill="#a8a8a8" text-anchor="end">1.0k</text>
<text x="271" y="118" font-size="9" fill="#a8a8a8" text-anchor="end">2.0k</text>
<text x="302.5" y="118" font-size="9" fill="#a8a8a8" text-anchor="end">3.0k</text>
<text x="341" y="118" font-size="9" fill="#a8a8a8" text-anchor="end">5.0k</text>
<text x="395.5" y="118" font-size="9" fill="#a8a8a8" text-anchor="end">10.0k</text>
<text x="448.5" y="118" font-size="9" fill="#a8a8a8" text-anchor="end">20.0k</text>
<rect x="0" y="59.5" width="458.5" height="1.9" fill="#00e2e4"/>
<path d="M0.0,50.5 L0.5,47.0 L2.5,44.8 L10.0,43.8 L20.0,45.0 L30.0,48.5 L40.0,54.3 L46.3,61.8 L52.5,70.5 L60.0,76.8 L65.0,77.3 L72.5,74.3 L80.0,69.3 L83.8,68.5 L90.0,73.5 L97.5,79.3 L107.5,73.5 L117.5,76.3 L133.8,81.8 L140.0,78.5 L146.3,76.8 L156.3,66.3 L160.0,68.0 L165.0,80.5 L169.5,88.5 L173.8,83.0 L180.0,85.0 L186.3,81.0 L192.5,91.0 L200.0,91.8 L205.0,79.3 L211.3,88.0 L215.0,86.8 L221.3,95.5 L225.0,89.3 L228.8,95.0 L232.5,88.8 L236.3,94.8 L240.0,91.3 L243.8,94.8 L247.5,91.0 L253.8,96.5 L257.6,84.5 L261.4,94.6 L265.5,88.4 L269.5,87.3 L274.0,96.8 L279.5,88.2 L283.5,92.2 L288.0,86.7 L293.0,92.5 L299.3,95.0 L304.3,92.5 L309.4,89.2 L314.4,100.0 L317.7,105.0 L320.7,100.0 L324.5,101.3 L328.3,105.9 L333.3,95.0 L335.8,98.8 L338.3,93.3 L340.0,99.8 L344.5,100.4 L349.0,101.5 L351.9,104.3 L354.1,102.6 L356.4,102.0 L358.6,100.4 L360.9,106.6 L362.6,110.5 L364.3,107.7 L367.1,107.7 L369.4,108.3 L371.1,106.6 L373.3,108.3 L377.3,107.1 L379.5,100.4 L381.2,103.2 L383.5,116.7 L385.7,119.9 L388.6,119.6 L391.4,117.0 L393.6,119.6 L395.0,121.0" fill="none" stroke="#e2dc2c" stroke-width="1.2" stroke-linejoin="round"/>
<circle cx="64.5" cy="60.5" r="6.6" fill="#f2181c"/><text x="64.5" y="64.2" font-size="11" text-anchor="middle" fill="#2a0608" stroke="#2a0608" stroke-width=".35">1</text>
<circle cx="133.3" cy="60.5" r="6.6" fill="#fff"/><text x="133.3" y="64.2" font-size="11" text-anchor="middle" fill="#000" stroke="#000" stroke-width=".35">2</text>
<circle cx="220.3" cy="60.5" r="6.6" fill="#fff"/><text x="220.3" y="64.2" font-size="11" text-anchor="middle" fill="#000" stroke="#000" stroke-width=".35">3</text>
<circle cx="342.4" cy="60.5" r="6.6" fill="#fff"/><text x="342.4" y="64.2" font-size="11" text-anchor="middle" fill="#000" stroke="#000" stroke-width=".35">4</text>
</svg>
<div class="t" style="left:473px;top:92px">Gain:</div>
<div class="a" style="left:480px;top:117px;width:6.2px;height:233px;border-radius:3px;background:linear-gradient(90deg,#8a9090 0,#a9aeae 35%,#c9cdcd 75%,#b4b9b9 100%)"></div>
<div class="a" style="left:475px;top:197px;width:16.5px;height:28px;border-radius:4px;border:1px solid #8a9090;background:linear-gradient(#dcdede 0,#fbfbfb 25%,#f0f0f0 48%,#c0c4c4 52%,#d8dada 100%);box-shadow:0 1px 2px rgba(0,0,0,.3)"></div><div class="a" style="left:478.5px;top:210.3px;width:10.3px;height:1.2px;background:#1a1a1a"></div>
<div class="inp" style="left:469px;top:363px;width:33px;height:22.5px;background:#fbfbfb"><div class="t" style="left:8px;top:2px">0.0</div></div>
<div class="a" style="left:0.8px;top:240px;width:460.2px;height:144.5px;border:1px solid #acacac;background:#f7f7f7"></div>
<div class="a" style="left:46px;top:222px;width:41.5px;height:18.5px;border:1px solid #acacac;border-bottom:none;background:#ececec"></div>
<div class="t" style="left:51px;top:224.5px">2</div>
<div class="a" style="left:87px;top:222px;width:42.5px;height:18.5px;border:1px solid #acacac;border-bottom:none;background:#ececec"></div>
<div class="t" style="left:92px;top:224.5px">3</div>
<div class="a" style="left:129px;top:222px;width:40.5px;height:18.5px;border:1px solid #acacac;border-bottom:none;background:#ececec"></div>
<div class="t" style="left:134px;top:224.5px">4</div>
<div class="a" style="left:0.8px;top:220px;width:45.7px;height:21.5px;border:1px solid #acacac;border-bottom:none;background:#f7f7f7"></div>
<div class="t" style="left:9px;top:223px">1</div>
<div class="cb" style="left:15px;top:254.5px"><svg width="11" height="11" viewBox="0 0 11 11"><path d="M1.8,4.9 L4.4,8.1 L9.4,1.9" fill="none" stroke="#0a0a0a" stroke-width="2.1"/></svg></div>
<div class="t" style="left:31px;top:254px">Enabled</div>
<div class="t" style="left:96.5px;top:255px">Type:</div>
<div class="a" style="left:129px;top:251px;width:137px;height:21px;border:1px solid #acacac;background:linear-gradient(#efefef,#e4e4e4)"></div>
<div class="t" style="left:133px;top:255px">Low Shelf</div>
<svg class="a" style="left:253px;top:257px" width="12" height="10" viewBox="0 0 12 10"><path d="M2,2.5 L6,7 L10,2.5" fill="none" stroke="#555" stroke-width="1.4"/></svg>
<div class="cb" style="left:275.7px;top:254.5px"><svg width="11" height="11" viewBox="0 0 11 11"><path d="M1.8,4.9 L4.4,8.1 L9.4,1.9" fill="none" stroke="#0a0a0a" stroke-width="2.1"/></svg></div>
<div class="t" style="left:292px;top:254px">Log-scale automated frequencies</div>
<div class="t" style="right:1058.7px;left:auto;top:281.5px;transform-origin:100% 0">Frequency (Hz):</div>
<div class="trk" style="left:106px;top:285.7px;width:211.5px"></div>
<div class="th" style="left:130px;top:278.7px"><i></i></div>
<div class="inp" style="left:328px;top:277.0px;width:53px"><div class="t">100.0</div></div>
<div class="t" style="right:1058.7px;left:auto;top:309.5px;transform-origin:100% 0">Gain (dB):</div>
<div class="trk" style="left:106px;top:313.7px;width:211.5px"></div>
<div class="th" style="left:220px;top:306.7px"><i></i></div>
<div class="inp" style="left:328px;top:305.0px;width:53px"><div class="t">0.0</div></div>
<div class="t" style="right:1058.7px;left:auto;top:338.0px;transform-origin:100% 0">Bandwidth (oct):</div>
<div class="trk" style="left:106px;top:342.2px;width:211.5px"></div>
<div class="th" style="left:200px;top:335.2px"><i></i></div>
<div class="inp" style="left:328px;top:333.0px;width:53px"><div class="t">2.00</div></div>
<div class="a" style="left:232px;top:280.5px;width:1px;height:16px;background:#333"></div>
<div class="inp" style="left:384px;top:277px;width:53px"><div class="t">G2</div></div>
<div class="btn" style="left:2.5px;top:391px;width:66.5px;height:20px;"><div class="t" style="left:9px;top:2px">Add band</div></div>
<div class="btn" style="left:74.5px;top:391px;width:77.5px;height:20px;"><div class="t" style="left:5px;top:2px">Remove band</div></div>
<div class="btn" style="left:158.5px;top:391px;width:90.5px;height:20px;"><div class="t" style="left:10.5px;top:2px">Reset defaults</div></div>
<div class="cb" style="left:256px;top:394.5px"><svg width="11" height="11" viewBox="0 0 11 11"><path d="M1.8,4.9 L4.4,8.1 L9.4,1.9" fill="none" stroke="#0a0a0a" stroke-width="2.1"/></svg></div>
<div class="t" style="left:272.5px;top:394px">Show tabs</div>
<div class="cb" style="left:334px;top:394.5px"><svg width="11" height="11" viewBox="0 0 11 11"><path d="M1.8,4.9 L4.4,8.1 L9.4,1.9" fill="none" stroke="#0a0a0a" stroke-width="2.1"/></svg></div>
<div class="t" style="left:350.5px;top:394px">Show grid</div>
<div class="cb" style="left:409px;top:394.5px"></div>
<div class="t" style="left:425.5px;top:394px">Show phase</div>
<svg class="a" style="left:360px;top:14px" width="30" height="36" viewBox="360 14 30 36"><circle cx="373.7" cy="29.1" r="10.2" fill="none" stroke="#1c2226" stroke-width="0.9"/><circle cx="373.7" cy="29.1" r="9" fill="#80b1d1" fill-opacity=".88" stroke="#fbfcfd" stroke-width="1.9"/><path d="M372.3,27.5 V44.9 L376.1,41.3 L378.9,47.2 L381.7,45.9 L378.9,40.1 L383.8,39.6 Z" fill="#fbfbfb" stroke="#20262a" stroke-width="0.8" stroke-linejoin="round"/></svg>
</body>
</html>
